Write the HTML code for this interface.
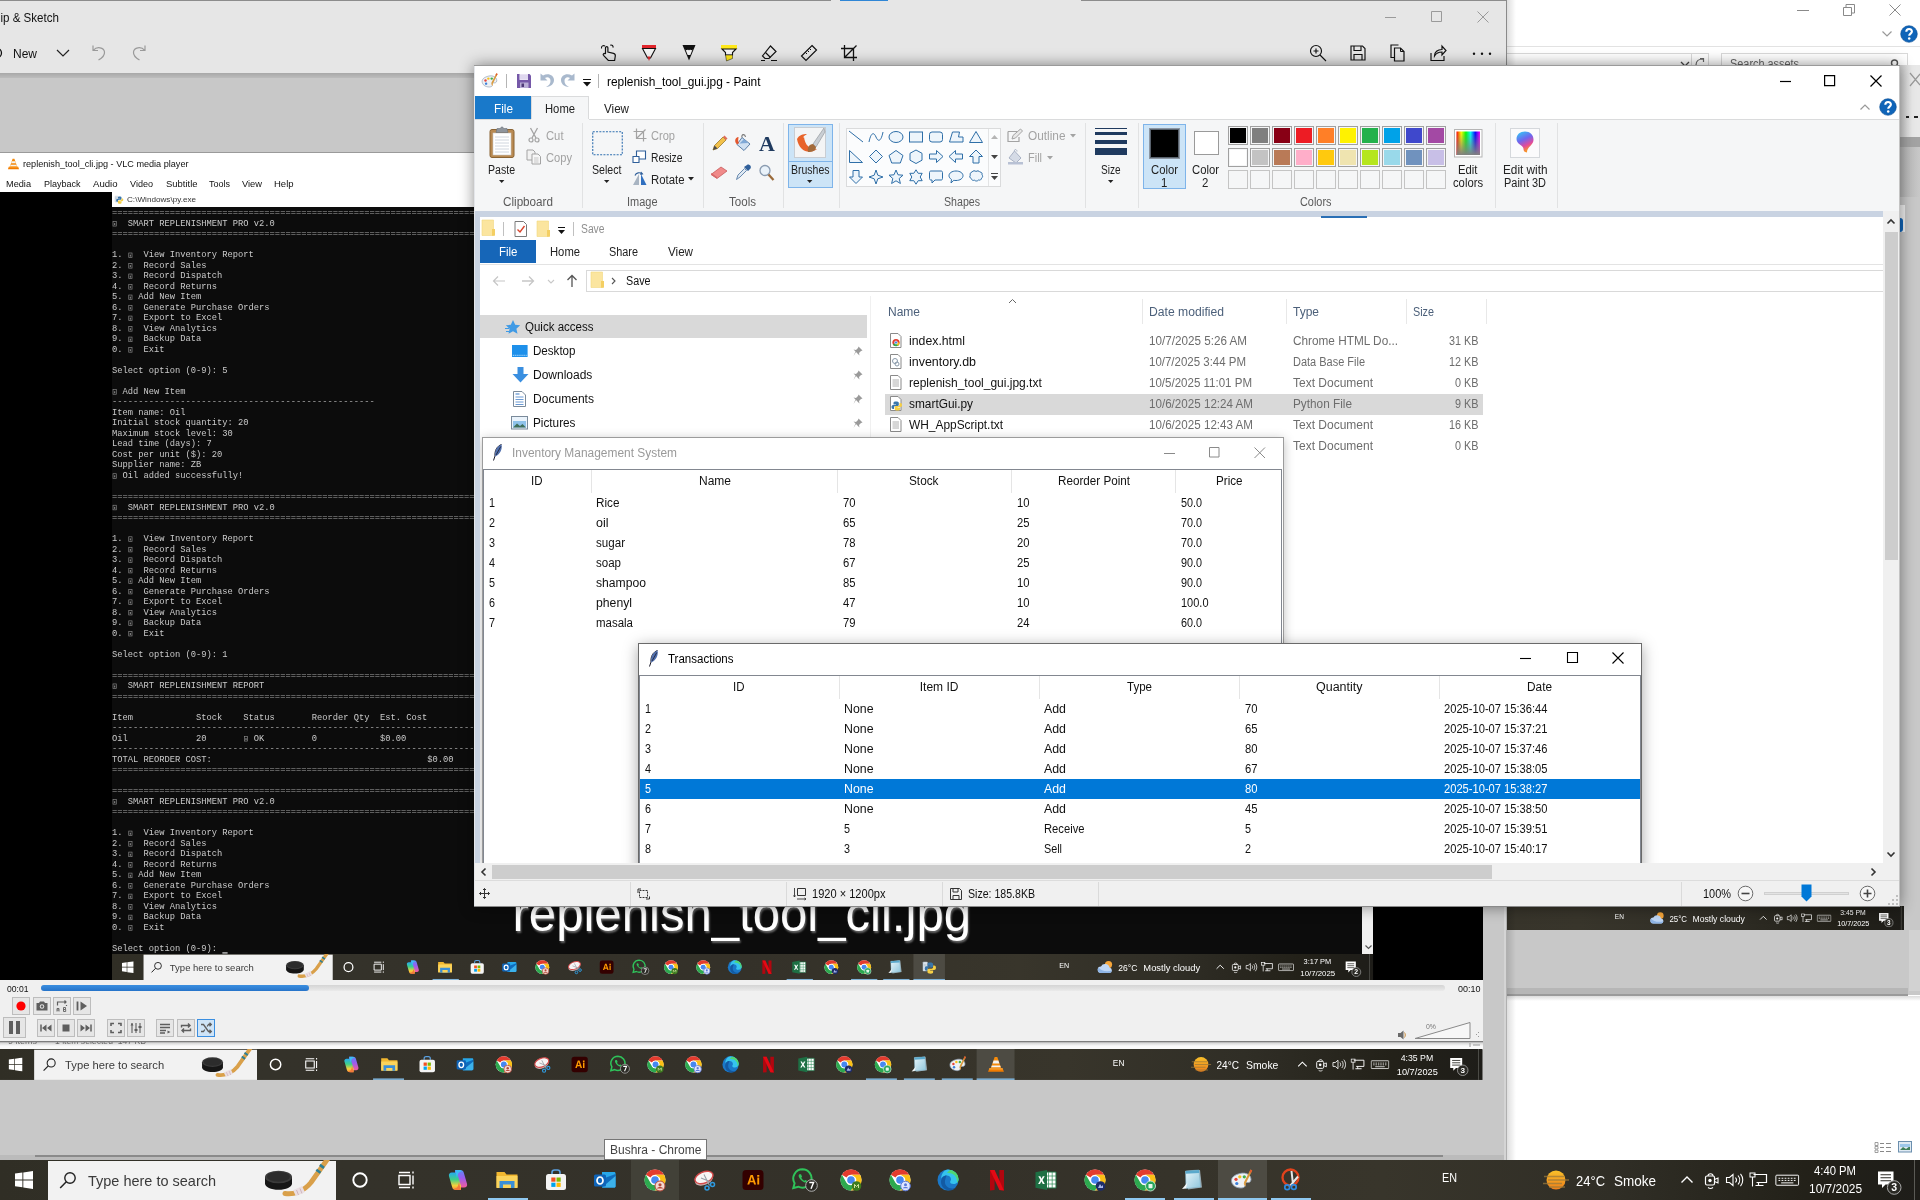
<!DOCTYPE html><html><head><meta charset="utf-8"><title>screen</title><style>
html,body{margin:0;padding:0;}
body{width:1920px;height:1200px;overflow:hidden;position:relative;background:#fff;font-family:"Liberation Sans",sans-serif;}
#r div,#r span,#r svg{position:absolute;}
#r{position:absolute;left:0;top:0;width:1920px;height:1200px;overflow:hidden;will-change:transform;}
.t{white-space:pre;line-height:1.1;transform-origin:0 50%;font-family:"Liberation Sans",sans-serif;}
.t.m{font-family:"Liberation Mono",monospace;}
.t.s{font-family:"Liberation Serif",serif;}
.c{white-space:pre;font-family:"Liberation Mono",monospace;color:#cacaca;font-size:13.333px;line-height:16px;}
.c.d{color:#a8a8a8;}
svg{overflow:visible;}
</style></head><body>
<svg width="0" height="0" style="position:absolute"><defs>
<linearGradient id="gCop" x1="0" y1="0" x2="1" y2="1"><stop offset="0" stop-color="#2bb7f5"/><stop offset=".35" stop-color="#7a5cf0"/><stop offset=".7" stop-color="#f0568a"/><stop offset="1" stop-color="#f8b23c"/></linearGradient>
<linearGradient id="gEdge" x1="0" y1="0" x2="1" y2="1"><stop offset="0" stop-color="#35c1f1"/><stop offset=".5" stop-color="#1b7fd6"/><stop offset="1" stop-color="#2fc26b"/></linearGradient>
<linearGradient id="gNote" x1="0" y1="0" x2="1" y2="1"><stop offset="0" stop-color="#e8f6fb"/><stop offset="1" stop-color="#8fc6dc"/></linearGradient>
<linearGradient id="gRain" x1="0" y1="0" x2="1" y2="0"><stop offset="0" stop-color="#f00"/><stop offset=".2" stop-color="#ff0"/><stop offset=".4" stop-color="#0f0"/><stop offset=".6" stop-color="#0ff"/><stop offset=".8" stop-color="#00f"/><stop offset="1" stop-color="#f0f"/></linearGradient>
<linearGradient id="gRainV" x1="0" y1="0" x2="0" y2="1"><stop offset="0" stop-color="#808080" stop-opacity="0"/><stop offset="1" stop-color="#808080"/></linearGradient>
<linearGradient id="gP3d" x1=".2" y1="0" x2=".6" y2="1"><stop offset="0" stop-color="#35c4f5"/><stop offset=".4" stop-color="#6f66ee"/><stop offset=".7" stop-color="#e34a9a"/><stop offset=".92" stop-color="#f7922c"/></linearGradient>
<linearGradient id="gSmoke" x1="0" y1="0" x2="0" y2="1"><stop offset="0" stop-color="#f9c02a"/><stop offset="1" stop-color="#ee7f1a"/></linearGradient>

<linearGradient id="gCopL" x1="0" y1="0" x2="0" y2="1"><stop offset="0" stop-color="#25a9f0"/><stop offset=".4" stop-color="#3ed08a"/><stop offset=".75" stop-color="#f7d13a"/><stop offset="1" stop-color="#f58a3a"/></linearGradient><linearGradient id="gCopR" x1="0" y1="0" x2="0" y2="1"><stop offset="0" stop-color="#5a8af5"/><stop offset=".45" stop-color="#9a5cf0"/><stop offset="1" stop-color="#f25c9a"/></linearGradient>
<symbol id="win" viewBox="0 0 18 18"><path fill="#fff" d="M0 2.6 7.4 1.6V8.5H0zM8.3 1.5 18 0v8.5H8.3zM0 9.4h7.4v6.9L0 15.3zM8.3 9.4H18V18l-9.7-1.4z"/></symbol>
<symbol id="srch" viewBox="0 0 18 18"><circle cx="11" cy="7" r="5.2" fill="none" stroke="#222" stroke-width="1.4"/><path d="M7.3 10.8 1.2 17" stroke="#222" stroke-width="1.5"/></symbol>
<symbol id="puck" viewBox="0 0 72 40"><path d="M23 33.500C32 35 42 31 49 22.500L67 -3" fill="none" stroke="#d9a04a" stroke-width="5" stroke-linecap="round"/><path d="M32.500 33.300 41.500 29" stroke="#eadfe3" stroke-width="6.500"/><path d="M34.500 30l2 5M38 28.500l2 5" stroke="#c9a9b5" stroke-width=".8"/><path d="M55.700 12.300 57.200 10.200M59.200 7.400 60.700 5.300" stroke="#2d7f95" stroke-width="5.200"/><path d="M3 17v6.500c0 3.500 6 6.300 13.500 6.300S30 27 30 23.500V17z" fill="#161616"/><ellipse cx="16.500" cy="17" rx="13.500" ry="6.300" fill="#3b3b3b"/><ellipse cx="16.500" cy="16.800" rx="11.500" ry="4.900" fill="#2c2c2c"/></symbol>
<symbol id="cort" viewBox="0 0 24 24"><circle cx="12" cy="12" r="6.700" fill="none" stroke="#fff" stroke-width="1.900"/></symbol>
<symbol id="tview" viewBox="0 0 24 24"><path d="M4 7.5h11v9H4z" fill="none" stroke="#fff" stroke-width="1.4"/><path d="M4 4.5h11M4 19.5h11M18 7.5v9M18 3.5v2M18 18.5v2" stroke="#fff" stroke-width="1.4"/></symbol>
<symbol id="copilot" viewBox="0 0 24 24"><path d="M9 2h5.500c1.800 0 2.800 1 3.300 2.700l3.200 11c.6 2-.6 3.800-2.800 3.800h-2.700c-1.800 0-2.800-1-3.300-2.700L9 6z" fill="url(#gCopR)"/><path d="M15 22H9.500c-1.800 0-2.800-1-3.300-2.700L3 8.300C2.400 6.300 3.600 4.500 5.800 4.500h2.700c1.800 0 2.800 1 3.300 2.700L15 18z" fill="url(#gCopL)"/><path d="M9.300 2h4c1.200 0 2 .5 2.500 1.500-2 0-3.300.8-3.800 2.700L11 10z" fill="#3dbcf5"/><path d="M14.700 22h-4c-1.200 0-2-.5-2.500-1.500 2 0 3.300-.8 3.800-2.700L13 14z" fill="#f5793b"/></symbol>
<symbol id="explorer" viewBox="0 0 24 24"><path d="M1.500 4h8l2 2.500h11v13h-21z" fill="#f2b830"/><path d="M1.500 8h21v12h-21z" fill="#fbd45c"/><path d="M4.500 13h15v7h-15z" fill="#3a8fd8"/><path d="M8 16.500h8V20H8z" fill="#fbd45c"/></symbol>
<symbol id="store" viewBox="0 0 24 24"><path d="M8 6V4.500C8 3 9 2 10.500 2h3C15 2 16 3 16 4.500V6" fill="none" stroke="#5aa0e0" stroke-width="1.600"/><rect x="2" y="6" width="20" height="16" rx="2.500" fill="#f4f4f4"/><rect x="7.300" y="9.500" width="4.200" height="4.200" fill="#f25022"/><rect x="12.500" y="9.500" width="4.200" height="4.200" fill="#7fba00"/><rect x="7.300" y="14.700" width="4.200" height="4.200" fill="#00a4ef"/><rect x="12.500" y="14.700" width="4.200" height="4.200" fill="#ffb900"/></symbol>
<symbol id="outlook" viewBox="0 0 24 24"><path d="M9 4h12c1 0 1.500.5 1.500 1.500V18c0 1-.5 1.500-1.500 1.500H9z" fill="#28a8ea"/><path d="M9 11l13.500-5v12c0 1-.5 1.500-1.500 1.500H9z" fill="#0f6cbd"/><path d="M9 19.500 22.500 8v10c0 1-.5 1.500-1.500 1.500z" fill="#50d0ff" opacity=".7"/><rect x="1" y="6.500" width="12" height="12" rx="1.500" fill="#0f64b8"/><ellipse cx="7" cy="12.500" rx="3" ry="3.500" fill="none" stroke="#fff" stroke-width="1.700"/></symbol>
<symbol id="chrome" viewBox="0 0 24 24"><circle cx="12" cy="12" r="10.500" fill="#fff"/><path d="M12 1.500A10.500 10.500 0 0 1 21.100 6.750H12A5.250 5.250 0 0 0 7.450 9.400L2.900 6.750A10.500 10.500 0 0 1 12 1.500z" fill="#e33b2e"/><path d="M21.100 6.750A10.500 10.500 0 0 1 12 22.500l4.550-7.870A5.250 5.250 0 0 0 16.550 9.400L12 6.750z" fill="#fbc116"/><path d="M2.900 6.750 7.450 14.630A5.250 5.250 0 0 0 16.550 14.630L12 22.500A10.500 10.500 0 0 1 2.900 6.750z" fill="#2da94f"/><circle cx="12" cy="12" r="4.700" fill="#fff"/><circle cx="12" cy="12" r="3.800" fill="#4688f1"/></symbol>
<symbol id="chromeA" viewBox="0 0 24 24"><use href="#chrome"/><circle cx="17" cy="18" r="5" fill="#f3d9d2" stroke="#b5493a" stroke-width="1"/><circle cx="17" cy="16.800" r="1.600" fill="#b5493a"/><path d="M14 20.500c.5-2 5.500-2 6 0" fill="#b5493a"/></symbol>
<symbol id="chromeB" viewBox="0 0 24 24"><use href="#chrome"/><circle cx="17.500" cy="18" r="4.800" fill="#3d7a1f"/><path d="M15.500 20v-3.600l2 2.200 2-2.200V20" stroke="#cfe3a0" stroke-width="1" fill="none"/></symbol>
<symbol id="chromeC" viewBox="0 0 24 24"><use href="#chrome"/><circle cx="17.500" cy="18" r="4.800" fill="#dfe6ff" stroke="#5b78d8" stroke-width="1"/><circle cx="17.500" cy="16.800" r="1.500" fill="#5b78d8"/><path d="M14.800 20.300c.5-1.800 4.900-1.800 5.400 0" fill="#5b78d8"/></symbol>
<symbol id="chromeD" viewBox="0 0 24 24"><use href="#chrome"/><circle cx="17.500" cy="18" r="4.800" fill="#1d2c6a"/><path d="M15 20l2-4 1.500 2.500L20 17v3z" fill="#a9b6ea"/></symbol>
<symbol id="chromeE" viewBox="0 0 24 24"><use href="#chrome"/><circle cx="17.500" cy="18" r="5" fill="#27a35b" stroke="#d8f2e0" stroke-width=".8"/><rect x="15.500" y="16" width="4" height="4.200" rx=".6" fill="#e6f7ea"/></symbol>
<symbol id="sniptool" viewBox="0 0 24 24"><ellipse cx="11" cy="11.500" rx="9.500" ry="5.500" fill="#c9b5b5" transform="rotate(-22 11 11.500)"/><ellipse cx="11" cy="9.500" rx="9.500" ry="5.500" fill="#f8f5f5" stroke="#d44a4a" stroke-width="1.500" transform="rotate(-22 11 9.500)"/><path d="M11 6.500l5.500 11M8 10l10 4" stroke="#9aa0a8" stroke-width="1.100"/><circle cx="14" cy="20" r="2" fill="none" stroke="#2f9ae0" stroke-width="1.500"/><circle cx="19.500" cy="16.500" r="2" fill="none" stroke="#2f9ae0" stroke-width="1.500"/></symbol>
<symbol id="ai" viewBox="0 0 24 24"><rect x="1.500" y="2" width="21" height="20" rx="3.500" fill="#330000"/><path d="M6.300 16.500 9.600 7h2.200l3.300 9.500h-2l-.7-2.200H9l-.7 2.200zM9.500 12.700h2.400l-1.200-3.900zM16.300 9.500h1.900v7h-1.900zM16.200 7h2.100v1.700h-2.100z" fill="#ff9a00"/></symbol>
<symbol id="whatsapp" viewBox="0 0 28 26"><path d="M11.500 2.300a9.200 9.200 0 0 0-7.900 13.900L2.300 21l4.900-1.300A9.200 9.200 0 1 0 11.500 2.300z" fill="none" stroke="#2fc25a" stroke-width="2"/><path d="M8.300 7.200c-.8.700-1 2 .1 3.800 1.300 2.200 3.300 3.900 5.300 4.500 1.300.4 2.300-.3 2.700-1.400l-2.100-1.200-1 .9c-1.200-.5-2.600-1.900-3.100-3l.9-1L10 7.300z" fill="#2fc25a"/><circle cx="20.500" cy="18.500" r="5.800" fill="#2b2a25" stroke="#bbb" stroke-width=".9"/><path d="M18.300 15.500h4.300l-2.600 6.300" stroke="#fff" stroke-width="1.400" fill="none"/></symbol>
<symbol id="edge" viewBox="0 0 24 24"><circle cx="12" cy="12" r="10.500" fill="#1b78c8"/><path d="M12 1.500A10.500 10.500 0 0 1 22.500 11c0 3-2.200 5-5 5-2.200 0-3.400-1-3.400-2 0-.8.900-1.300.9-2.700 0-2.200-1.900-3.800-4.300-3.800-2.500 0-4.500 1.200-5.700 3C5.500 5.500 8.300 1.500 12 1.500z" fill="#35c3ee"/><path d="M14 2c5 .5 8.500 4.500 8.500 9 0 1.500-.5 2.800-1.500 3.700C21.500 9 18 4.500 11 5c1-1.500 2-2.500 3-3z" fill="#4fd675"/><path d="M10.700 7.500c-3 0-5.700 2.700-5.700 6.500 0 4.700 4 8.300 8.500 8.300 2.500 0 4.800-1 6.300-2.600-1.200.6-2.500.9-3.800.9-4 0-7.100-3-7.100-6.500 0-2.600 1-5 1.800-6.600z" fill="#135aa3"/></symbol>
<symbol id="netflix" viewBox="0 0 24 24"><path d="M5 2h4.600v20L5 22.500z" fill="#b1060f"/><path d="M14.400 2H19v20.500l-4.600-.5z" fill="#b1060f"/><path d="M5 2h4.600L19 22.500l-4.600-.5z" fill="#e50914"/></symbol>
<symbol id="excel" viewBox="0 0 24 24"><path d="M10 4h12v16H10z" fill="#fff" stroke="#1e7044" stroke-width="1"/><path d="M14.500 4v16M18.200 4v16M10 8h12M10 12h12M10 16h12" stroke="#2a8a55" stroke-width=".7"/><path d="M1.500 4.200 13 2v20L1.500 19.800z" fill="#1e7044"/><path d="M4.300 8.200h2l1.200 2.500L8.800 8.200h1.900l-2.200 3.800 2.300 3.900H8.800l-1.400-2.700-1.400 2.700H4.100l2.300-3.900z" fill="#fff"/></symbol>
<symbol id="notepad" viewBox="0 0 24 24"><path d="M7 3.500 20 2l2 17.500-14 2z" fill="#9aa7ad"/><path d="M5.500 3 19 2l1.500 17-14.500 1.500z" fill="url(#gNote)" stroke="#7fb4cc" stroke-width=".5"/><path d="M5.500 3 19 2l.3 3-13.600.8z" fill="#5aa9cc"/><path d="M2 21l5.500-6.500L6 20.500z" fill="#f4f8fa"/></symbol>
<symbol id="paint" viewBox="0 0 24 24"><path d="M10 5.500c6-1.500 11 1.500 11 6 0 2.800-2.300 3.200-4 3-1.500-.2-2.500.8-2 2.200.6 1.800-.9 3.300-4 3.300-5.500 0-9.500-3.200-9.500-7.500C1.500 9 5 6.700 10 5.500z" fill="#eef1f4" stroke="#8fa0b3" stroke-width=".9"/><circle cx="6" cy="11.300" r="1.600" fill="#e8443a"/><circle cx="9.800" cy="8.800" r="1.600" fill="#f6c11c"/><circle cx="14.300" cy="8.800" r="1.600" fill="#3fae49"/><circle cx="6.800" cy="15.500" r="1.600" fill="#3b7fd9"/><path d="M20.500 1.500l1.700 1-6.400 13-2 .6.300-2z" fill="#d99a3d"/><path d="M20.500 1.500l1.700 1-1.200 2.400-1.700-1z" fill="#e2592f"/><path d="M13.800 16.100l2-.6-.4 3.300z" fill="#f0a033"/></symbol>
<symbol id="vlc" viewBox="0 0 24 24"><path d="M10.300 2.500h3.400l5 14H5.300z" fill="#f58a0b"/><path d="M8.900 7h6.200l1.300 3.600H7.600zM6.700 13.200h10.600l.9 2.500H5.800z" fill="#f4f4f4"/><path d="M3.500 17h17l1.800 4.500H1.700z" fill="#f17b00"/><path d="M3.500 17h17l.6 1.500H2.900z" fill="#ffa735"/></symbol>
<symbol id="python" viewBox="0 0 24 24"><rect x="2.500" y="4" width="7" height="14" rx="1" fill="#dfe7ee" stroke="#9fb0bf" stroke-width=".7"/><path d="M4.500 7v4M7 7v7" stroke="#9fb0bf" stroke-width=".9"/><path d="M13 5c-2.500 0-3.500 1-3.500 2.500V10H14v.8H8c-1.800 0-2.800 1.300-2.800 3.400 0 2.100 1 3.400 2.800 3.400h1.400v-2.200c0-1.500 1.200-2.700 2.800-2.700h3.600c1.300 0 2.200-1 2.200-2.300V7.500C18 6 16.500 5 13 5z" fill="#3a76ab"/><path d="M14.500 22c2.500 0 3.500-1 3.500-2.500V17h-4.500v-.8h6c1.800 0 2.800-1.300 2.800-3.400 0-2.100-1-3.400-2.800-3.400H18v2.200c0 1.500-1.200 2.700-2.800 2.700h-3.600c-1.300 0-2.200 1-2.200 2.300v2.900c0 1.500 1.500 2.500 5.100 2.500z" fill="#f6cf45"/></symbol>
<symbol id="snipsk" viewBox="0 0 24 24"><circle cx="11.500" cy="9.500" r="8" fill="none" stroke="#e2431c" stroke-width="2.300"/><path d="M12.500 3l1.300 11.500M19 8.500l-7.500 9" stroke="#e6e6e6" stroke-width="2"/><circle cx="14.800" cy="19" r="2.400" fill="none" stroke="#2d8be0" stroke-width="1.700"/><circle cx="8.200" cy="19.200" r="2.400" fill="none" stroke="#2d8be0" stroke-width="1.700"/></symbol>
<symbol id="smoke" viewBox="0 0 28 24"><circle cx="14" cy="12" r="9.500" fill="url(#gSmoke)"/><path d="M2 8.500h20M6 12h21M1 15.500h19M7 19h16" stroke="#9c7a3a" stroke-width="1.300" opacity=".75"/></symbol>
<symbol id="cloudy" viewBox="0 0 28 24"><circle cx="18" cy="8" r="5.500" fill="#f6a63a"/><path d="M6.500 21a5 5 0 0 1 0-10 7 7 0 0 1 13 1.500 4.300 4.300 0 0 1 0 8.500z" fill="#bfd7f5"/><path d="M6.500 21a5 5 0 0 1-3.500-8.500c3 5 12 7 20 4.500a4.300 4.300 0 0 1-3.500 4z" fill="#8fb5e6"/></symbol>
<symbol id="chev" viewBox="0 0 16 16"><path d="M2.500 10.500 8 5l5.500 5.500" fill="none" stroke="#fff" stroke-width="1.400"/></symbol>
<symbol id="meet" viewBox="0 0 16 20"><rect x="1.500" y="6" width="9" height="9" rx="1.500" fill="none" stroke="#fff" stroke-width="1.200"/><path d="M10.500 9.500 14 8v5l-3.500-1.500M4 6c0-3 5-3 5 0M4 17.500c1.500 1.200 3.500 1.200 5 0" fill="none" stroke="#fff" stroke-width="1.100"/><circle cx="6" cy="10.500" r="1.700" fill="#fff"/></symbol>
<symbol id="vol" viewBox="0 0 20 16"><path d="M1.500 5.500h3L8 2.500v11l-3.500-3h-3z" fill="none" stroke="#fff" stroke-width="1.100"/><path d="M10.500 5.500c1.200 1.400 1.200 3.600 0 5M13 3.500c2.200 2.600 2.200 6.400 0 9M15.500 1.800c3 3.600 3 8.800 0 12.400" fill="none" stroke="#fff" stroke-width="1.100"/></symbol>
<symbol id="net" viewBox="0 0 20 16"><path d="M4.500 2.500h13v8h-10M9.500 10.500v3M6.500 13.500h8" fill="none" stroke="#fff" stroke-width="1.200"/><rect x="1" y="1" width="5" height="4" fill="none" stroke="#fff" stroke-width="1"/><path d="M3.500 5v9.500" stroke="#fff" stroke-width="1.100"/></symbol>
<symbol id="kbd" viewBox="0 0 28 16"><rect x="1" y="2.500" width="26" height="11.500" rx="1" fill="none" stroke="#fff" stroke-width="1.100"/><path d="M4 6h2M7.500 6h2M11 6h2M14.500 6h2M18 6h2M21.500 6h2M4 8.500h2M7.500 8.500h2M11 8.500h2M14.500 8.500h2M18 8.500h2M21.500 8.500h2M7 11.300h14" stroke="#fff" stroke-width="1.100"/></symbol>
<symbol id="notif" viewBox="0 0 30 28"><path d="M3 4.500h15.500v13H10.500l-3.500 3.500v-3.500H3z" fill="#fff"/><path d="M5.500 7.800h10.500M5.500 10.800h10.500M5.500 13.800h10.500" stroke="#2b2a25" stroke-width="1.100"/><circle cx="19.200" cy="20.500" r="6.800" fill="#2b2a25" stroke="#aaa" stroke-width="1"/></symbol>
<symbol id="qmark" viewBox="0 0 18 18"><circle cx="9" cy="9" r="8.300" fill="#0f64b8"/><circle cx="9" cy="9" r="8.300" fill="none" stroke="#0a4d94" stroke-width=".6"/><path d="M6.300 6.800c0-3.600 5.600-3.600 5.600-.3 0 2-2.700 2.200-2.700 4.300" fill="none" stroke="#fff" stroke-width="2.100"/><circle cx="9.200" cy="13.500" r="1.250" fill="#fff"/></symbol>
</defs></svg>
<div id="r"><div style="left:1506px;top:0px;width:414px;height:1160px;background:#fff;"></div><svg style="left:1797px;top:4px;" width="12" height="12" viewBox="0 0 12 12"><path d="M0 6.500h12" stroke="#8a8a8a" stroke-width="1"/></svg><svg style="left:1843px;top:4px;" width="12" height="12" viewBox="0 0 12 12"><path d="M.5 3.500h8v8h-8zM3 3.500V.5h8.500V9H8.500" fill="none" stroke="#8a8a8a" stroke-width="1"/></svg><svg style="left:1889px;top:4px;" width="12" height="12" viewBox="0 0 12 12"><path d="M.5.5l11 11M11.500.5l-11 11" stroke="#8a8a8a" stroke-width="1"/></svg><svg style="left:1881px;top:30px;" width="12" height="8" viewBox="0 0 12 8"><path d="M1.500 1.500 6 6l4.500-4.500" fill="none" stroke="#999" stroke-width="1.200"/></svg><svg style="left:1900px;top:25px;" width="18" height="18"><use href="#qmark"/></svg><div style="left:1506px;top:46px;width:414px;height:1px;background:#e2e2e2;"></div><div style="left:1506px;top:53px;width:203px;height:14px;background:#fff;border:1px solid #d9d9d9;box-sizing:border-box;"></div><div style="left:1691px;top:53px;width:1px;height:14px;background:#d9d9d9;"></div><svg style="left:1680px;top:61px;" width="10" height="6" viewBox="0 0 10 6"><path d="M1 1l4 4 4-4" fill="none" stroke="#444" stroke-width="1.300"/></svg><svg style="left:1694px;top:57px;" width="12" height="10" viewBox="0 0 12 10"><path d="M2 8c0-4 3-6 7-6M6 1.500h3.500V5" fill="none" stroke="#666" stroke-width="1.200"/></svg><div style="left:1721px;top:53px;width:187px;height:14px;background:#fff;border:1px solid #d9d9d9;box-sizing:border-box;"></div><span class="t" style="left:1730px;top:57.5px;font-size:12px;color:#666;transform:scaleX(0.9075);">Search assets</span><svg style="left:1889px;top:58px;" width="10" height="10" viewBox="0 0 10 10"><circle cx="5.500" cy="5" r="3" fill="none" stroke="#555" stroke-width="1.400"/></svg><div style="left:1506px;top:65px;width:414px;height:930px;background:#c8c8c8;"></div><div style="left:1900px;top:65px;width:20px;height:72px;background:linear-gradient(90deg,#cfcfcf,#e8e8e8 60%);"></div><svg style="left:1909px;top:72px;" width="11" height="16" viewBox="0 0 11 16"><path d="M1 1l10 12M1 14L11 2" stroke="#999" stroke-width="1.200" fill="none"/></svg><div style="left:1906px;top:116px;width:3px;height:2px;background:#222;"></div><div style="left:1914px;top:116px;width:4px;height:2px;background:#222;"></div><div style="left:1900px;top:137px;width:20px;height:10px;background:#a3a3a3;"></div><div style="left:1900px;top:147px;width:20px;height:50px;background:linear-gradient(90deg,#b4b4b4,#c8c8c8);"></div><div style="left:1900px;top:205px;width:5px;height:27px;background:#f0f0f0;"></div><div style="left:1900px;top:218px;width:3px;height:14px;background:#0f64b8;border-radius:0 7px 7px 0;"></div><div style="left:740.5px;top:906px;width:1920px;height:40px;transform:scale(0.606);transform-origin:0 0;overflow:hidden;"><div style="left:0;top:0;width:1920px;height:40px;background:linear-gradient(90deg,#302e25 0%,#34322a 18%,#343129 50%,#38352b 72%,#302e26 84%,#232119 94%,#1e1d19 100%)"></div><svg style="left:15px;top:11px;" width="18" height="18"><use href="#win"/></svg><div style="left:48px;top:1px;width:288px;height:39px;background:#f2f2f2;"></div><svg style="left:59px;top:11px;" width="18" height="18"><use href="#srch"/></svg><span class="t" style="left:88px;top:12.5px;font-size:15px;color:#3a3a3a;transform:scaleX(0.9656);">Type here to search</span><svg style="left:262px;top:0px;" width="72" height="40"><use href="#puck"/></svg><svg style="left:348px;top:8px;" width="24" height="24"><use href="#cort"/></svg><svg style="left:395px;top:8px;" width="24" height="24"><use href="#tview"/></svg><svg style="left:446px;top:8px;" width="24" height="24"><use href="#copilot"/></svg><svg style="left:495px;top:8px;" width="24" height="24"><use href="#explorer"/></svg><svg style="left:544px;top:8px;" width="24" height="24"><use href="#store"/></svg><svg style="left:593px;top:8px;" width="24" height="24"><use href="#outlook"/></svg><svg style="left:643px;top:8px;" width="24" height="24"><use href="#chromeA"/></svg><svg style="left:693px;top:8px;" width="24" height="24"><use href="#sniptool"/></svg><svg style="left:741px;top:8px;" width="24" height="24"><use href="#ai"/></svg><svg style="left:791px;top:7px;" width="28" height="26"><use href="#whatsapp"/></svg><svg style="left:839px;top:8px;" width="24" height="24"><use href="#chromeB"/></svg><svg style="left:888px;top:8px;" width="24" height="24"><use href="#chromeC"/></svg><svg style="left:936px;top:8px;" width="24" height="24"><use href="#edge"/></svg><svg style="left:985px;top:8px;" width="24" height="24"><use href="#netflix"/></svg><svg style="left:1034px;top:8px;" width="24" height="24"><use href="#excel"/></svg><svg style="left:1083px;top:8px;" width="24" height="24"><use href="#chromeD"/></svg><svg style="left:1133px;top:8px;" width="24" height="24"><use href="#chromeE"/></svg><svg style="left:1180px;top:8px;" width="24" height="24"><use href="#notepad"/></svg><svg style="left:1232px;top:8px;" width="24" height="24"><use href="#python"/></svg><span class="t" style="left:1442px;top:11.5px;font-size:12px;color:#fff;transform:scaleX(0.8998);">EN</span><svg style="left:1499px;top:8px;" width="28" height="24"><use href="#cloudy"/></svg><span class="t" style="left:1532px;top:12.5px;font-size:15px;color:#fff;transform:scaleX(0.8653);">25°C</span><span class="t" style="left:1570px;top:12.5px;font-size:15px;color:#fff;transform:scaleX(0.9520);">Mostly cloudy</span><svg style="left:1679px;top:12px;" width="16" height="16"><use href="#chev"/></svg><svg style="left:1704px;top:10px;" width="16" height="20"><use href="#meet"/></svg><svg style="left:1725px;top:12px;" width="20" height="16"><use href="#vol"/></svg><svg style="left:1749px;top:12px;" width="20" height="16"><use href="#net"/></svg><svg style="left:1774.5px;top:13px;" width="24.5" height="14"><use href="#kbd"/></svg><span class="t" style="left:1814px;top:5.3px;font-size:12px;color:#fff;transform:scaleX(0.9399);">3:45 PM</span><span class="t" style="left:1809px;top:23.3px;font-size:12px;color:#fff;transform:scaleX(0.9929);">10/7/2025</span><svg style="left:1875px;top:7px;" width="30" height="28"><use href="#notif"/></svg><span class="t" style="left:1891.28px;top:22.35px;font-size:10.5px;color:#fff;font-weight:bold;">3</span><div style="left:1914px;top:0px;width:1px;height:40px;background:#5a5a55;"></div></div><div style="left:1904px;top:906px;width:16px;height:24px;background:#c8c8c8;"></div><div style="left:1506px;top:930px;width:414px;height:61px;background:#c8c8c8;"></div><div style="left:1909px;top:930px;width:11px;height:61px;background:#d2d2d2;"></div><div style="left:1506px;top:988px;width:402px;height:5.5px;background:#b6b6b6;"></div><div style="left:1506px;top:993.5px;width:402px;height:2px;background:#9a9a9a;"></div><div style="left:1506px;top:995.5px;width:414px;height:164.5px;background:#fff;"></div><div style="left:1506px;top:995.5px;width:414px;height:5px;background:linear-gradient(#dcdcdc,#fff);"></div><svg style="left:1874px;top:1141px;" width="18" height="12" viewBox="0 0 18 12"><path d="M1 1.500h3v3h-3zM1 5.500h3v2.500h-3zM1 9h3v2.500h-3z" fill="none" stroke="#888" stroke-width=".8"/><path d="M6 2.500h4M12 2.500h5M6 6.500h4M12 6.500h5M6 10.500h4M12 10.500h5" stroke="#888" stroke-width="1"/></svg><svg style="left:1898px;top:1141px;" width="14" height="12" viewBox="0 0 14 12"><rect x=".5" y=".5" width="13" height="10.500" fill="#dfeaf3" stroke="#6b8fae" stroke-width="1"/><path d="M2 9l3-3 3 2 4-3v4z" fill="#3f7f5a"/><path d="M2 3h10v3H2z" fill="#9cc7ea"/></svg><div style="left:0px;top:0px;width:1506px;height:1160px;background:#c8c8c8;"></div><div style="left:0px;top:0px;width:1506px;height:73px;background:#e6e6e6;"></div><div style="left:0px;top:0px;width:831px;height:1px;background:#8c8c8c;"></div><div style="left:840px;top:0px;width:48px;height:1px;background:#2f86d6;"></div><div style="left:1081px;top:0px;width:425px;height:1px;background:#8c8c8c;"></div><div style="left:0px;top:73px;width:1506px;height:5px;background:linear-gradient(#a8a8a8,#bcbcbc);"></div><div style="left:1506px;top:0px;width:1px;height:73px;background:#8a8a8a;"></div><div style="left:1506px;top:73px;width:1px;height:1087px;background:#b0b0b0;"></div><div style="left:1507px;top:0px;width:9px;height:1160px;background:linear-gradient(90deg,rgba(0,0,0,.13),rgba(0,0,0,0));"></div><span class="t" style="left:-6px;top:10.8px;font-size:13px;color:#111;transform:scaleX(0.8906);">nip &amp; Sketch</span><svg style="left:-5px;top:46px;" width="9" height="13" viewBox="0 0 9 13"><circle cx="2" cy="7" r="4.500" fill="none" stroke="#111" stroke-width="1.300"/></svg><span class="t" style="left:13px;top:46.75px;font-size:13.5px;color:#111;transform:scaleX(0.8887);">New</span><svg style="left:56px;top:49px;" width="14" height="9" viewBox="0 0 14 9"><path d="M1 1l6 6 6-6" fill="none" stroke="#222" stroke-width="1.200"/></svg><svg style="left:91px;top:43px;" width="16" height="18" viewBox="0 0 16 18"><path d="M2 2.500v5h5M2.300 7.300C6 3 13 4.500 13.500 9c.3 3-2.500 6-6 8" fill="none" stroke="#9a9a9a" stroke-width="1.200"/></svg><svg style="left:131px;top:43px;" width="16" height="18" viewBox="0 0 16 18"><path d="M14 2.500v5H9M13.700 7.300C10 3 3 4.500 2.500 9c-.3 3 2.500 6 6 8" fill="none" stroke="#9a9a9a" stroke-width="1.200"/></svg><svg style="left:600px;top:44px;" width="18" height="18" viewBox="0 0 18 18"><path d="M5.500 9.500V3.800c0-1.700 2.400-1.700 2.400 0V8l5.600 1.300c1.500.4 2 1.400 1.800 2.700l-.7 4.500H8.300L3.500 11.300c-.9-1.100.4-2.400 1.500-1.500z" fill="none" stroke="#111" stroke-width="1.200"/><path d="M1.500 4.500C1 2 3.500.8 5 2.200M10.200 1.200c1.800-.6 3.300.7 2.800 2.400" fill="none" stroke="#111" stroke-width="1.100"/></svg><svg style="left:641px;top:44px;" width="16" height="18" viewBox="0 0 16 18"><path d="M1 1h14v3H1z" fill="#e0262c"/><path d="M1.500 4.500h13L9.500 14h-3z" fill="#f4f4f4" stroke="#111" stroke-width="1.100"/><path d="M6.300 12.500h3.400L8 17z" fill="#e0262c"/></svg><svg style="left:681px;top:44px;" width="16" height="18" viewBox="0 0 16 18"><path d="M1.500 1h13L8 16.500z" fill="#111"/><path d="M4.500 5.500c.8 1 1.500 1 1.800 0 .6 1 1.100 1 1.700 0 .6 1 1.100 1 1.700 0 .4 1 1 1 1.800 0L9.300 11h-2.600z" fill="#f4f4f4"/></svg><svg style="left:720px;top:44px;" width="18" height="18" viewBox="0 0 18 18"><path d="M1 1h16v4H1z" fill="#ffe81a"/><path d="M2 5h14l-3.500 3.500V11h-7V8.500z" fill="#f4f4f4" stroke="#111" stroke-width="1.100"/><path d="M5.500 11h7v3.500L6.500 17z" fill="#ffe81a" stroke="#111" stroke-width=".5"/></svg><svg style="left:760px;top:44px;" width="18" height="18" viewBox="0 0 18 18"><path d="M10.500 2 16 7.500l-7 7H5L2.500 12z" fill="none" stroke="#111" stroke-width="1.200"/><path d="M5.500 8.500l5 5M1 16.500h4M11 16.500h6" stroke="#111" stroke-width="1.200"/></svg><svg style="left:800px;top:44px;" width="18" height="18" viewBox="0 0 18 18"><path d="M12 1.500 16.500 6 6 16.500 1.500 12z" fill="none" stroke="#111" stroke-width="1.200"/><path d="M9.500 4.500l1.500 1.500M7.500 6.500l1.500 1.500M5.500 8.500l1.500 1.500" stroke="#111" stroke-width="1"/></svg><svg style="left:840px;top:44px;" width="18" height="18" viewBox="0 0 18 18"><path d="M4.500 1v12.500H17M1 4.500h12.500V17M5 13 16.500 1.500" fill="none" stroke="#111" stroke-width="1.300"/></svg><svg style="left:1309px;top:44px;" width="18" height="18" viewBox="0 0 18 18"><circle cx="7" cy="7" r="5.500" fill="none" stroke="#111" stroke-width="1.150"/><path d="M11 11l6 6M4.500 7h5M7 4.500v5" stroke="#111" stroke-width="1.150"/></svg><svg style="left:1350px;top:45px;" width="16" height="16" viewBox="0 0 16 16"><path d="M1 1h11.500L15 3.500V15H1z" fill="none" stroke="#111" stroke-width="1.150"/><path d="M4 1v4.500h7V1M4 15V9.500h8V15" fill="none" stroke="#111" stroke-width="1.150"/></svg><svg style="left:1390px;top:44px;" width="16" height="18" viewBox="0 0 16 18"><path d="M8.500 1H1v12.500h3.500" fill="none" stroke="#111" stroke-width="1.200"/><path d="M4.500 4h6l3.500 3.500V17h-9.500z" fill="none" stroke="#111" stroke-width="1.200"/><path d="M10.500 4v3.500H14" fill="none" stroke="#111" stroke-width="1"/></svg><svg style="left:1429px;top:44px;" width="18" height="18" viewBox="0 0 18 18"><path d="M2 9v7.500h13V12" fill="none" stroke="#111" stroke-width="1.150"/><path d="M5.500 12c0-4 3-6.500 7.500-6.500V2l4 4.500-4 4.500V8C9.500 8 7 9.500 5.500 12z" fill="none" stroke="#111" stroke-width="1.200"/></svg><svg style="left:1472px;top:52px;" width="22" height="4" viewBox="0 0 22 4"><circle cx="2" cy="1.700" r="1.200" fill="#111"/><circle cx="10" cy="1.700" r="1.200" fill="#111"/><circle cx="18" cy="1.700" r="1.200" fill="#111"/></svg><svg style="left:1385px;top:11px;" width="12" height="12" viewBox="0 0 12 12"><path d="M0 6.500h11" stroke="#9a9a9a" stroke-width="1"/></svg><svg style="left:1431px;top:11px;" width="12" height="12" viewBox="0 0 12 12"><path d="M.5.5h10v10H.5z" fill="none" stroke="#9a9a9a" stroke-width="1"/></svg><svg style="left:1477px;top:11px;" width="12" height="12" viewBox="0 0 12 12"><path d="M.5.5l11 11M11.500.5l-11 11" stroke="#9a9a9a" stroke-width="1"/></svg><div style="left:0px;top:1154.5px;width:1506px;height:5.5px;background:#bbbbbb;"></div><div style="left:35px;top:1155px;width:1408px;height:2px;background:#8a8a8a;"></div><div style="left:1504px;top:78px;width:2px;height:1082px;background:#d4d4d4;"></div><div style="left:0;top:152px;width:1482.700px;height:928.400px;overflow:hidden;"><div style="left:0;top:-152px;width:1483px;height:1200px;"><div style="left:0px;top:152px;width:1483px;height:1px;background:#9a9a9a;"></div><div style="left:0px;top:153px;width:1483px;height:39px;background:#fff;"></div><svg style="left:7px;top:157px;" width="13" height="14"><use href="#vlc"/></svg><span class="t" style="left:22.5px;top:158.85px;font-size:9.5px;color:#111;transform:scaleX(0.9585);">replenish_tool_cli.jpg - VLC media player</span><span class="t" style="left:6px;top:179.05px;font-size:9.5px;color:#111;transform:scaleX(0.9663);">Media</span><span class="t" style="left:44px;top:179.05px;font-size:9.5px;color:#111;transform:scaleX(0.9469);">Playback</span><span class="t" style="left:93px;top:179.05px;font-size:9.5px;color:#111;transform:scaleX(1.0084);">Audio</span><span class="t" style="left:130px;top:179.05px;font-size:9.5px;color:#111;transform:scaleX(0.9534);">Video</span><span class="t" style="left:165.5px;top:179.05px;font-size:9.5px;color:#111;transform:scaleX(0.9941);">Subtitle</span><span class="t" style="left:209px;top:179.05px;font-size:9.5px;color:#111;transform:scaleX(0.9469);">Tools</span><span class="t" style="left:242px;top:179.05px;font-size:9.5px;color:#111;transform:scaleX(0.9795);">View</span><span class="t" style="left:274px;top:179.05px;font-size:9.5px;color:#111;">Help</span><div style="left:0px;top:192px;width:1483px;height:788px;background:#000;"></div><div style="left:112px;top:192px;width:1261.3px;height:15px;background:#fff;"></div><svg style="left:113.5px;top:194px;" width="10" height="11"><use href="#python"/></svg><span class="t" style="left:127px;top:195.8px;font-size:8px;color:#333;transform:scaleX(1.0166);">C:\Windows\py.exe</span><div style="left:112px;top:207px;width:1261.3px;height:747px;background:#0c0c0c;"></div><div style="left:1362px;top:207px;width:11.3px;height:747px;background:#f0f0f0;"></div><svg style="left:1363.5px;top:944px;" width="9" height="7" viewBox="0 0 9 7"><path d="M1.500 1.500l3 3 3-3" fill="none" stroke="#555" stroke-width="1.200"/></svg><div style="left:112.3px;top:208.15px;width:700px;height:1140px;transform:scale(0.6569);transform-origin:0 0;"><span class="c d" style="left:0;top:0px;">======================================================================</span><span class="c" style="left:0;top:16px;">   SMART REPLENISHMENT PRO v2.0</span><div style="left:0.8px;top:19.8px;width:6.4px;height:8.6px;background:none;border:1.300px solid #8c8c8c;box-sizing:border-box;"></div><div style="left:3.2px;top:22.5px;width:1.6px;height:3px;background:#7a7a7a;"></div><span class="c d" style="left:0;top:32px;">======================================================================</span><span class="c" style="left:0;top:64px;">1.    View Inventory Report</span><div style="left:24.8px;top:67.8px;width:6.4px;height:8.6px;background:none;border:1.300px solid #8c8c8c;box-sizing:border-box;"></div><div style="left:27.2px;top:70.5px;width:1.6px;height:3px;background:#7a7a7a;"></div><span class="c" style="left:0;top:80px;">2.    Record Sales</span><div style="left:24.8px;top:83.8px;width:6.4px;height:8.6px;background:none;border:1.300px solid #8c8c8c;box-sizing:border-box;"></div><div style="left:27.2px;top:86.5px;width:1.6px;height:3px;background:#7a7a7a;"></div><span class="c" style="left:0;top:96px;">3.    Record Dispatch</span><div style="left:24.8px;top:99.8px;width:6.4px;height:8.6px;background:none;border:1.300px solid #8c8c8c;box-sizing:border-box;"></div><div style="left:27.2px;top:102.5px;width:1.6px;height:3px;background:#7a7a7a;"></div><span class="c" style="left:0;top:112px;">4.    Record Returns</span><div style="left:24.8px;top:115.8px;width:6.4px;height:8.6px;background:none;border:1.300px solid #8c8c8c;box-sizing:border-box;"></div><div style="left:27.2px;top:118.5px;width:1.6px;height:3px;background:#7a7a7a;"></div><span class="c" style="left:0;top:128px;">5.   Add New Item</span><div style="left:24.8px;top:131.8px;width:6.4px;height:8.6px;background:none;border:1.300px solid #8c8c8c;box-sizing:border-box;"></div><div style="left:27.2px;top:134.5px;width:1.6px;height:3px;background:#7a7a7a;"></div><span class="c" style="left:0;top:144px;">6.    Generate Purchase Orders</span><div style="left:24.8px;top:147.8px;width:6.4px;height:8.6px;background:none;border:1.300px solid #8c8c8c;box-sizing:border-box;"></div><div style="left:27.2px;top:150.5px;width:1.6px;height:3px;background:#7a7a7a;"></div><span class="c" style="left:0;top:160px;">7.    Export to Excel</span><div style="left:24.8px;top:163.8px;width:6.4px;height:8.6px;background:none;border:1.300px solid #8c8c8c;box-sizing:border-box;"></div><div style="left:27.2px;top:166.5px;width:1.6px;height:3px;background:#7a7a7a;"></div><span class="c" style="left:0;top:176px;">8.    View Analytics</span><div style="left:24.8px;top:179.8px;width:6.4px;height:8.6px;background:none;border:1.300px solid #8c8c8c;box-sizing:border-box;"></div><div style="left:27.2px;top:182.5px;width:1.6px;height:3px;background:#7a7a7a;"></div><span class="c" style="left:0;top:192px;">9.    Backup Data</span><div style="left:24.8px;top:195.8px;width:6.4px;height:8.6px;background:none;border:1.300px solid #8c8c8c;box-sizing:border-box;"></div><div style="left:27.2px;top:198.5px;width:1.6px;height:3px;background:#7a7a7a;"></div><span class="c" style="left:0;top:208px;">0.    Exit</span><div style="left:24.8px;top:211.8px;width:6.4px;height:8.6px;background:none;border:1.300px solid #8c8c8c;box-sizing:border-box;"></div><div style="left:27.2px;top:214.5px;width:1.6px;height:3px;background:#7a7a7a;"></div><span class="c" style="left:0;top:240px;">Select option (0-9): 5</span><span class="c" style="left:0;top:272px;">  Add New Item</span><div style="left:0.8px;top:275.8px;width:6.4px;height:8.6px;background:none;border:1.300px solid #8c8c8c;box-sizing:border-box;"></div><div style="left:3.2px;top:278.5px;width:1.6px;height:3px;background:#7a7a7a;"></div><span class="c d" style="left:0;top:288px;">--------------------------------------------------</span><span class="c" style="left:0;top:304px;">Item name: Oil</span><span class="c" style="left:0;top:320px;">Initial stock quantity: 20</span><span class="c" style="left:0;top:336px;">Maximum stock level: 30</span><span class="c" style="left:0;top:352px;">Lead time (days): 7</span><span class="c" style="left:0;top:368px;">Cost per unit (&#36;): 20</span><span class="c" style="left:0;top:384px;">Supplier name: ZB</span><span class="c" style="left:0;top:400px;">  Oil added successfully!</span><div style="left:0.8px;top:403.8px;width:6.4px;height:8.6px;background:none;border:1.300px solid #8c8c8c;box-sizing:border-box;"></div><div style="left:3.2px;top:406.5px;width:1.6px;height:3px;background:#7a7a7a;"></div><span class="c d" style="left:0;top:432px;">======================================================================</span><span class="c" style="left:0;top:448px;">   SMART REPLENISHMENT PRO v2.0</span><div style="left:0.8px;top:451.8px;width:6.4px;height:8.6px;background:none;border:1.300px solid #8c8c8c;box-sizing:border-box;"></div><div style="left:3.2px;top:454.5px;width:1.6px;height:3px;background:#7a7a7a;"></div><span class="c d" style="left:0;top:464px;">======================================================================</span><span class="c" style="left:0;top:496px;">1.    View Inventory Report</span><div style="left:24.8px;top:499.8px;width:6.4px;height:8.6px;background:none;border:1.300px solid #8c8c8c;box-sizing:border-box;"></div><div style="left:27.2px;top:502.5px;width:1.6px;height:3px;background:#7a7a7a;"></div><span class="c" style="left:0;top:512px;">2.    Record Sales</span><div style="left:24.8px;top:515.8px;width:6.4px;height:8.6px;background:none;border:1.300px solid #8c8c8c;box-sizing:border-box;"></div><div style="left:27.2px;top:518.5px;width:1.6px;height:3px;background:#7a7a7a;"></div><span class="c" style="left:0;top:528px;">3.    Record Dispatch</span><div style="left:24.8px;top:531.8px;width:6.4px;height:8.6px;background:none;border:1.300px solid #8c8c8c;box-sizing:border-box;"></div><div style="left:27.2px;top:534.5px;width:1.6px;height:3px;background:#7a7a7a;"></div><span class="c" style="left:0;top:544px;">4.    Record Returns</span><div style="left:24.8px;top:547.8px;width:6.4px;height:8.6px;background:none;border:1.300px solid #8c8c8c;box-sizing:border-box;"></div><div style="left:27.2px;top:550.5px;width:1.6px;height:3px;background:#7a7a7a;"></div><span class="c" style="left:0;top:560px;">5.   Add New Item</span><div style="left:24.8px;top:563.8px;width:6.4px;height:8.6px;background:none;border:1.300px solid #8c8c8c;box-sizing:border-box;"></div><div style="left:27.2px;top:566.5px;width:1.6px;height:3px;background:#7a7a7a;"></div><span class="c" style="left:0;top:576px;">6.    Generate Purchase Orders</span><div style="left:24.8px;top:579.8px;width:6.4px;height:8.6px;background:none;border:1.300px solid #8c8c8c;box-sizing:border-box;"></div><div style="left:27.2px;top:582.5px;width:1.6px;height:3px;background:#7a7a7a;"></div><span class="c" style="left:0;top:592px;">7.    Export to Excel</span><div style="left:24.8px;top:595.8px;width:6.4px;height:8.6px;background:none;border:1.300px solid #8c8c8c;box-sizing:border-box;"></div><div style="left:27.2px;top:598.5px;width:1.6px;height:3px;background:#7a7a7a;"></div><span class="c" style="left:0;top:608px;">8.    View Analytics</span><div style="left:24.8px;top:611.8px;width:6.4px;height:8.6px;background:none;border:1.300px solid #8c8c8c;box-sizing:border-box;"></div><div style="left:27.2px;top:614.5px;width:1.6px;height:3px;background:#7a7a7a;"></div><span class="c" style="left:0;top:624px;">9.    Backup Data</span><div style="left:24.8px;top:627.8px;width:6.4px;height:8.6px;background:none;border:1.300px solid #8c8c8c;box-sizing:border-box;"></div><div style="left:27.2px;top:630.5px;width:1.6px;height:3px;background:#7a7a7a;"></div><span class="c" style="left:0;top:640px;">0.    Exit</span><div style="left:24.8px;top:643.8px;width:6.4px;height:8.6px;background:none;border:1.300px solid #8c8c8c;box-sizing:border-box;"></div><div style="left:27.2px;top:646.5px;width:1.6px;height:3px;background:#7a7a7a;"></div><span class="c" style="left:0;top:672px;">Select option (0-9): 1</span><span class="c d" style="left:0;top:704px;">======================================================================</span><span class="c" style="left:0;top:720px;">   SMART REPLENISHMENT REPORT</span><div style="left:0.8px;top:723.8px;width:6.4px;height:8.6px;background:none;border:1.300px solid #8c8c8c;box-sizing:border-box;"></div><div style="left:3.2px;top:726.5px;width:1.6px;height:3px;background:#7a7a7a;"></div><span class="c d" style="left:0;top:736px;">======================================================================</span><span class="c" style="left:0;top:768px;">Item            Stock    Status       Reorder Qty  Est. Cost</span><span class="c d" style="left:0;top:784px;">----------------------------------------------------------------------</span><span class="c" style="left:0;top:800px;">Oil             20         OK         0            &#36;0.00</span><div style="left:200.8px;top:803.8px;width:6.4px;height:8.6px;background:none;border:1.300px solid #8c8c8c;box-sizing:border-box;"></div><div style="left:203.2px;top:806.5px;width:1.6px;height:3px;background:#7a7a7a;"></div><span class="c d" style="left:0;top:816px;">----------------------------------------------------------------------</span><span class="c" style="left:0;top:832px;">TOTAL REORDER COST:                                         &#36;0.00</span><span class="c d" style="left:0;top:848px;">======================================================================</span><span class="c d" style="left:0;top:880px;">======================================================================</span><span class="c" style="left:0;top:896px;">   SMART REPLENISHMENT PRO v2.0</span><div style="left:0.8px;top:899.8px;width:6.4px;height:8.6px;background:none;border:1.300px solid #8c8c8c;box-sizing:border-box;"></div><div style="left:3.2px;top:902.5px;width:1.6px;height:3px;background:#7a7a7a;"></div><span class="c d" style="left:0;top:912px;">======================================================================</span><span class="c" style="left:0;top:944px;">1.    View Inventory Report</span><div style="left:24.8px;top:947.8px;width:6.4px;height:8.6px;background:none;border:1.300px solid #8c8c8c;box-sizing:border-box;"></div><div style="left:27.2px;top:950.5px;width:1.6px;height:3px;background:#7a7a7a;"></div><span class="c" style="left:0;top:960px;">2.    Record Sales</span><div style="left:24.8px;top:963.8px;width:6.4px;height:8.6px;background:none;border:1.300px solid #8c8c8c;box-sizing:border-box;"></div><div style="left:27.2px;top:966.5px;width:1.6px;height:3px;background:#7a7a7a;"></div><span class="c" style="left:0;top:976px;">3.    Record Dispatch</span><div style="left:24.8px;top:979.8px;width:6.4px;height:8.6px;background:none;border:1.300px solid #8c8c8c;box-sizing:border-box;"></div><div style="left:27.2px;top:982.5px;width:1.6px;height:3px;background:#7a7a7a;"></div><span class="c" style="left:0;top:992px;">4.    Record Returns</span><div style="left:24.8px;top:995.8px;width:6.4px;height:8.6px;background:none;border:1.300px solid #8c8c8c;box-sizing:border-box;"></div><div style="left:27.2px;top:998.5px;width:1.6px;height:3px;background:#7a7a7a;"></div><span class="c" style="left:0;top:1008px;">5.   Add New Item</span><div style="left:24.8px;top:1011.8px;width:6.4px;height:8.6px;background:none;border:1.300px solid #8c8c8c;box-sizing:border-box;"></div><div style="left:27.2px;top:1014.5px;width:1.6px;height:3px;background:#7a7a7a;"></div><span class="c" style="left:0;top:1024px;">6.    Generate Purchase Orders</span><div style="left:24.8px;top:1027.8px;width:6.4px;height:8.6px;background:none;border:1.300px solid #8c8c8c;box-sizing:border-box;"></div><div style="left:27.2px;top:1030.5px;width:1.6px;height:3px;background:#7a7a7a;"></div><span class="c" style="left:0;top:1040px;">7.    Export to Excel</span><div style="left:24.8px;top:1043.8px;width:6.4px;height:8.6px;background:none;border:1.300px solid #8c8c8c;box-sizing:border-box;"></div><div style="left:27.2px;top:1046.5px;width:1.6px;height:3px;background:#7a7a7a;"></div><span class="c" style="left:0;top:1056px;">8.    View Analytics</span><div style="left:24.8px;top:1059.8px;width:6.4px;height:8.6px;background:none;border:1.300px solid #8c8c8c;box-sizing:border-box;"></div><div style="left:27.2px;top:1062.5px;width:1.6px;height:3px;background:#7a7a7a;"></div><span class="c" style="left:0;top:1072px;">9.    Backup Data</span><div style="left:24.8px;top:1075.8px;width:6.4px;height:8.6px;background:none;border:1.300px solid #8c8c8c;box-sizing:border-box;"></div><div style="left:27.2px;top:1078.5px;width:1.6px;height:3px;background:#7a7a7a;"></div><span class="c" style="left:0;top:1088px;">0.    Exit</span><div style="left:24.8px;top:1091.8px;width:6.4px;height:8.6px;background:none;border:1.300px solid #8c8c8c;box-sizing:border-box;"></div><div style="left:27.2px;top:1094.5px;width:1.6px;height:3px;background:#7a7a7a;"></div><span class="c" style="left:0;top:1120px;">Select option (0-9): </span><div style="left:168px;top:1132.5px;width:8px;height:2.3px;background:#ccc;"></div></div><div style="left:112px;top:953.7px;width:1920px;height:40px;transform:scale(0.6569);transform-origin:0 0;overflow:hidden;"><div style="left:0;top:0;width:1920px;height:40px;background:linear-gradient(90deg,#302e25 0%,#34322a 18%,#343129 50%,#38352b 72%,#302e26 84%,#232119 94%,#1e1d19 100%)"></div><div style="left:1220px;top:0px;width:48px;height:40px;background:#4d4b43;"></div><div style="left:1220px;top:38px;width:48px;height:2px;background:#7fb2d8;"></div><div style="left:488px;top:38px;width:40px;height:2px;background:#7fb2d8;"></div><div style="left:1027px;top:38px;width:40px;height:2px;background:#7fb2d8;"></div><div style="left:1125px;top:38px;width:40px;height:2px;background:#7fb2d8;"></div><div style="left:1174px;top:38px;width:40px;height:2px;background:#7fb2d8;"></div><svg style="left:15px;top:11px;" width="18" height="18"><use href="#win"/></svg><div style="left:48px;top:1px;width:288px;height:39px;background:#f2f2f2;"></div><svg style="left:59px;top:11px;" width="18" height="18"><use href="#srch"/></svg><span class="t" style="left:88px;top:12.5px;font-size:15px;color:#3a3a3a;transform:scaleX(0.9656);">Type here to search</span><svg style="left:262px;top:0px;" width="72" height="40"><use href="#puck"/></svg><svg style="left:348px;top:8px;" width="24" height="24"><use href="#cort"/></svg><svg style="left:395px;top:8px;" width="24" height="24"><use href="#tview"/></svg><svg style="left:446px;top:8px;" width="24" height="24"><use href="#copilot"/></svg><svg style="left:495px;top:8px;" width="24" height="24"><use href="#explorer"/></svg><svg style="left:544px;top:8px;" width="24" height="24"><use href="#store"/></svg><svg style="left:593px;top:8px;" width="24" height="24"><use href="#outlook"/></svg><svg style="left:643px;top:8px;" width="24" height="24"><use href="#chromeA"/></svg><svg style="left:693px;top:8px;" width="24" height="24"><use href="#sniptool"/></svg><svg style="left:741px;top:8px;" width="24" height="24"><use href="#ai"/></svg><svg style="left:791px;top:7px;" width="28" height="26"><use href="#whatsapp"/></svg><svg style="left:839px;top:8px;" width="24" height="24"><use href="#chromeB"/></svg><svg style="left:888px;top:8px;" width="24" height="24"><use href="#chromeC"/></svg><svg style="left:936px;top:8px;" width="24" height="24"><use href="#edge"/></svg><svg style="left:985px;top:8px;" width="24" height="24"><use href="#netflix"/></svg><svg style="left:1034px;top:8px;" width="24" height="24"><use href="#excel"/></svg><svg style="left:1083px;top:8px;" width="24" height="24"><use href="#chromeD"/></svg><svg style="left:1133px;top:8px;" width="24" height="24"><use href="#chromeE"/></svg><svg style="left:1180px;top:8px;" width="24" height="24"><use href="#notepad"/></svg><svg style="left:1232px;top:8px;" width="24" height="24"><use href="#python"/></svg><span class="t" style="left:1442px;top:11.5px;font-size:12px;color:#fff;transform:scaleX(0.8998);">EN</span><svg style="left:1499px;top:8px;" width="28" height="24"><use href="#cloudy"/></svg><span class="t" style="left:1532px;top:12.5px;font-size:15px;color:#fff;transform:scaleX(0.8653);">26°C</span><span class="t" style="left:1570px;top:12.5px;font-size:15px;color:#fff;transform:scaleX(0.9520);">Mostly cloudy</span><svg style="left:1679px;top:12px;" width="16" height="16"><use href="#chev"/></svg><svg style="left:1704px;top:10px;" width="16" height="20"><use href="#meet"/></svg><svg style="left:1725px;top:12px;" width="20" height="16"><use href="#vol"/></svg><svg style="left:1749px;top:12px;" width="20" height="16"><use href="#net"/></svg><svg style="left:1774.5px;top:13px;" width="24.5" height="14"><use href="#kbd"/></svg><span class="t" style="left:1814px;top:5.3px;font-size:12px;color:#fff;transform:scaleX(0.9399);">3:17 PM</span><span class="t" style="left:1809px;top:23.3px;font-size:12px;color:#fff;transform:scaleX(0.9929);">10/7/2025</span><svg style="left:1875px;top:7px;" width="30" height="28"><use href="#notif"/></svg><span class="t" style="left:1891.28px;top:22.35px;font-size:10.5px;color:#fff;font-weight:bold;">2</span><div style="left:1914px;top:0px;width:1px;height:40px;background:#5a5a55;"></div></div><span class="t" style="left:512.5px;top:887.35px;font-size:49.1px;color:#fff;text-shadow:1px 2px 2px #666;">replenish_tool_cli.jpg</span><div style="left:0px;top:980px;width:1483px;height:61px;background:#f0f0f0;"></div><span class="t" style="left:7px;top:983.55px;font-size:9.5px;color:#111;transform:scaleX(0.9045);">00:01</span><span class="t" style="left:1458px;top:983.55px;font-size:9.5px;color:#111;transform:scaleX(0.9465);">00:10</span><div style="left:41px;top:985px;width:1404px;height:6px;background:linear-gradient(#d4d4d4,#eaeaea);border-radius:3px;"></div><div style="left:41px;top:985px;width:267.5px;height:6px;background:linear-gradient(#3a8ee0,#2673c9);border-radius:3px;"></div><div style="left:12px;top:996.5px;width:18px;height:18px;background:#e6e6e6;border:1px solid #bdbdbd;box-sizing:border-box;"></div><svg style="left:14px;top:998.5px;" width="14" height="14" viewBox="0 0 14 14"><circle cx="7" cy="7" r="4.600" fill="#f00"/></svg><div style="left:32.5px;top:996.5px;width:18px;height:18px;background:#e6e6e6;border:1px solid #bdbdbd;box-sizing:border-box;"></div><svg style="left:34.5px;top:998.5px;" width="14" height="14" viewBox="0 0 14 14"><path d="M1.500 4h2.500l1-1.500h4l1 1.500h2.500v7.500h-11z" fill="#5e5e5e"/><circle cx="7" cy="7.500" r="2.200" fill="#e6e6e6"/><circle cx="7" cy="7.500" r="1.200" fill="#5e5e5e"/></svg><div style="left:53px;top:996.5px;width:18px;height:18px;background:#e6e6e6;border:1px solid #bdbdbd;box-sizing:border-box;"></div><svg style="left:55px;top:998.5px;" width="14" height="14" viewBox="0 0 14 14"><path d="M2.500 6.500V3h8.500M9.500 1.500 11 3 9.500 4.500M11.500 6v1" fill="none" stroke="#5e5e5e" stroke-width="1.200"/><path d="M2 12.500V9.500h2v3M2 11h2M8.500 12.500v-4h2v2h-2M8.500 12.500h2.200v-2" fill="none" stroke="#5e5e5e" stroke-width=".9"/></svg><div style="left:73px;top:996.5px;width:18px;height:18px;background:#e6e6e6;border:1px solid #bdbdbd;box-sizing:border-box;"></div><svg style="left:75px;top:998.5px;" width="14" height="14" viewBox="0 0 14 14"><path d="M2.500 2.500v9" stroke="#5e5e5e" stroke-width="1.800"/><path d="M5.500 2.500 12 7l-6.500 4.500z" fill="#5e5e5e"/></svg><div style="left:3px;top:1016.75px;width:23px;height:21.5px;background:#e6e6e6;border:1px solid #bdbdbd;box-sizing:border-box;"></div><div style="left:9px;top:1021.3px;width:4.2px;height:12.8px;background:#5e5e5e;"></div><div style="left:16.3px;top:1021.3px;width:4.2px;height:12.8px;background:#5e5e5e;"></div><div style="left:37px;top:1018.5px;width:18px;height:18px;background:#e6e6e6;border:1px solid #bdbdbd;box-sizing:border-box;"></div><svg style="left:39px;top:1020.5px;" width="14" height="14" viewBox="0 0 14 14"><path d="M2 3.500v7" stroke="#5e5e5e" stroke-width="1.500"/><path d="M7.500 3.500v7L3 7zM12.500 3.500v7L8 7z" fill="#5e5e5e"/></svg><div style="left:57px;top:1018.5px;width:18px;height:18px;background:#e6e6e6;border:1px solid #bdbdbd;box-sizing:border-box;"></div><svg style="left:59px;top:1020.5px;" width="14" height="14" viewBox="0 0 14 14"><rect x="3.500" y="3.500" width="7" height="7" fill="#5e5e5e"/></svg><div style="left:77px;top:1018.5px;width:18px;height:18px;background:#e6e6e6;border:1px solid #bdbdbd;box-sizing:border-box;"></div><svg style="left:79px;top:1020.5px;" width="14" height="14" viewBox="0 0 14 14"><path d="M12 3.500v7" stroke="#5e5e5e" stroke-width="1.500"/><path d="M6.500 3.500v7L11 7zM1.500 3.500v7L6 7z" fill="#5e5e5e"/></svg><div style="left:107px;top:1018.5px;width:18px;height:18px;background:#e6e6e6;border:1px solid #bdbdbd;box-sizing:border-box;"></div><svg style="left:109px;top:1020.5px;" width="14" height="14" viewBox="0 0 14 14"><path d="M2 5V2.500h3M9 2.500h3V5M12 9v2.500H9M5 11.500H2V9" fill="none" stroke="#5e5e5e" stroke-width="1.600"/></svg><div style="left:127px;top:1018.5px;width:18px;height:18px;background:#e6e6e6;border:1px solid #bdbdbd;box-sizing:border-box;"></div><svg style="left:129px;top:1020.5px;" width="14" height="14" viewBox="0 0 14 14"><path d="M3 2v10M7 2v10M11 2v10" stroke="#5e5e5e" stroke-width="1.100"/><path d="M1.500 4.500 3 2l1.500 2.500zM5.500 8h3v2h-3zM9.500 5h3v2h-3z" fill="#5e5e5e"/></svg><div style="left:156px;top:1018.5px;width:18px;height:18px;background:#e6e6e6;border:1px solid #bdbdbd;box-sizing:border-box;"></div><svg style="left:158px;top:1020.5px;" width="14" height="14" viewBox="0 0 14 14"><path d="M2 3.500h10M2 6.500h10M2 9.500h6M2 12h5" stroke="#5e5e5e" stroke-width="1.300"/><path d="M9.500 9.500 12.500 11l-3 1.500z" fill="#5e5e5e"/></svg><div style="left:176.5px;top:1018.5px;width:18px;height:18px;background:#e6e6e6;border:1px solid #bdbdbd;box-sizing:border-box;"></div><svg style="left:178.5px;top:1020.5px;" width="14" height="14" viewBox="0 0 14 14"><path d="M2.500 6.500v-2h8M9 2.500l2 2-2 2M11.500 7.500v2h-8M5 7.500l-2 2 2 2" fill="none" stroke="#5e5e5e" stroke-width="1.400"/></svg><div style="left:197px;top:1018.5px;width:18px;height:18px;background:#cfe4f7;border:1px solid #3a8ee0;box-sizing:border-box;"></div><svg style="left:199px;top:1020.5px;" width="14" height="14" viewBox="0 0 14 14"><path d="M2 3.500h2.500l5 7H12M2 10.500h2.500l1.300-2M8.200 5.500l1.300-2H12M10.500 1.800 12.300 3.500 10.500 5.200M10.500 8.800l1.800 1.700-1.800 1.700" fill="none" stroke="#5e5e5e" stroke-width="1.300"/></svg><svg style="left:1397px;top:1028.5px;" width="10" height="12" viewBox="0 0 10 12"><path d="M1 4h2.500L6.500 1.500v9L3.500 8H1z" fill="#6a6a6a"/><path d="M7.500 3.500c1 1.500 1 3.500 0 5" fill="none" stroke="#c98a3a" stroke-width="1"/></svg><svg style="left:1413px;top:1020px;" width="60" height="20" viewBox="0 0 60 20"><path d="M2 18.500 57 2.500v16z" fill="#f7f7f7" stroke="#8a8a8a" stroke-width="1"/></svg><span class="t" style="left:1425.5px;top:1022.5px;font-size:7px;color:#777;transform:scaleX(0.9884);">0%</span><div style="left:1476px;top:1034px;width:1px;height:1px;background:#999;"></div><div style="left:1478px;top:1036px;width:1px;height:1px;background:#999;"></div><div style="left:1478px;top:1032px;width:1px;height:1px;background:#999;"></div><div style="left:0px;top:1042px;width:1483px;height:8px;background:#fafafa;"></div><div style="left:0;top:1042px;width:300px;height:8px;overflow:hidden;"><span class="t" style="left:8px;top:-5.75px;font-size:9.5px;color:#555;transform:scaleX(0.9471);">9 items</span><span class="t" style="left:55px;top:-5.75px;font-size:9.5px;color:#555;transform:scaleX(0.9070);">1 item selected  147 KB</span></div><div style="left:0px;top:1041px;width:1483px;height:5px;background:linear-gradient(rgba(90,90,90,.85),rgba(150,150,150,.35) 40%,rgba(200,200,200,0));"></div><svg style="left:1469px;top:1042px;" width="12" height="7" viewBox="0 0 12 7"><path d="M0 2h2M0 4h2M4 3h7" stroke="#999" stroke-width="1"/></svg><div style="left:-3.2px;top:1049.45px;width:1920px;height:40px;transform:scale(0.7738);transform-origin:0 0;overflow:hidden;"><div style="left:0;top:0;width:1920px;height:40px;background:linear-gradient(90deg,#302e25 0%,#34322a 18%,#343129 50%,#38352b 72%,#302e26 84%,#232119 94%,#1e1d19 100%)"></div><div style="left:1266px;top:0px;width:49px;height:40px;background:#4d4b43;"></div><div style="left:1266px;top:38px;width:49px;height:2px;background:#7fb2d8;"></div><div style="left:486px;top:38px;width:40px;height:2px;background:#7fb2d8;"></div><div style="left:1123px;top:38px;width:40px;height:2px;background:#7fb2d8;"></div><div style="left:1172px;top:38px;width:40px;height:2px;background:#7fb2d8;"></div><div style="left:1221px;top:38px;width:40px;height:2px;background:#7fb2d8;"></div><svg style="left:15px;top:11px;" width="18" height="18"><use href="#win"/></svg><div style="left:48px;top:1px;width:288px;height:39px;background:#f2f2f2;"></div><svg style="left:59px;top:11px;" width="18" height="18"><use href="#srch"/></svg><span class="t" style="left:88px;top:12.5px;font-size:15px;color:#3a3a3a;transform:scaleX(0.9656);">Type here to search</span><svg style="left:262px;top:0px;" width="72" height="40"><use href="#puck"/></svg><svg style="left:348px;top:8px;" width="24" height="24"><use href="#cort"/></svg><svg style="left:395px;top:8px;" width="24" height="24"><use href="#tview"/></svg><svg style="left:446px;top:8px;" width="24" height="24"><use href="#copilot"/></svg><svg style="left:495px;top:8px;" width="24" height="24"><use href="#explorer"/></svg><svg style="left:544px;top:8px;" width="24" height="24"><use href="#store"/></svg><svg style="left:593px;top:8px;" width="24" height="24"><use href="#outlook"/></svg><svg style="left:643px;top:8px;" width="24" height="24"><use href="#chromeA"/></svg><svg style="left:693px;top:8px;" width="24" height="24"><use href="#sniptool"/></svg><svg style="left:741px;top:8px;" width="24" height="24"><use href="#ai"/></svg><svg style="left:791px;top:7px;" width="28" height="26"><use href="#whatsapp"/></svg><svg style="left:839px;top:8px;" width="24" height="24"><use href="#chromeB"/></svg><svg style="left:888px;top:8px;" width="24" height="24"><use href="#chromeC"/></svg><svg style="left:936px;top:8px;" width="24" height="24"><use href="#edge"/></svg><svg style="left:985px;top:8px;" width="24" height="24"><use href="#netflix"/></svg><svg style="left:1034px;top:8px;" width="24" height="24"><use href="#excel"/></svg><svg style="left:1083px;top:8px;" width="24" height="24"><use href="#chromeD"/></svg><svg style="left:1133px;top:8px;" width="24" height="24"><use href="#chromeE"/></svg><svg style="left:1180px;top:8px;" width="24" height="24"><use href="#notepad"/></svg><svg style="left:1230px;top:8px;" width="24" height="24"><use href="#paint"/></svg><svg style="left:1279px;top:8px;" width="24" height="24"><use href="#vlc"/></svg><span class="t" style="left:1442px;top:11.5px;font-size:12px;color:#fff;transform:scaleX(0.8998);">EN</span><svg style="left:1542px;top:8px;" width="28" height="24"><use href="#smoke"/></svg><span class="t" style="left:1576px;top:12.5px;font-size:15px;color:#fff;transform:scaleX(0.8653);">24°C</span><span class="t" style="left:1614px;top:12.5px;font-size:15px;color:#fff;transform:scaleX(0.8997);">Smoke</span><svg style="left:1679px;top:12px;" width="16" height="16"><use href="#chev"/></svg><svg style="left:1704px;top:10px;" width="16" height="20"><use href="#meet"/></svg><svg style="left:1725px;top:12px;" width="20" height="16"><use href="#vol"/></svg><svg style="left:1749px;top:12px;" width="20" height="16"><use href="#net"/></svg><svg style="left:1774.5px;top:13px;" width="24.5" height="14"><use href="#kbd"/></svg><span class="t" style="left:1814px;top:5.3px;font-size:12px;color:#fff;transform:scaleX(0.9399);">4:35 PM</span><span class="t" style="left:1809px;top:23.3px;font-size:12px;color:#fff;transform:scaleX(0.9929);">10/7/2025</span><svg style="left:1875px;top:7px;" width="30" height="28"><use href="#notif"/></svg><span class="t" style="left:1891.28px;top:22.35px;font-size:10.5px;color:#fff;font-weight:bold;">3</span><div style="left:1914px;top:0px;width:1px;height:40px;background:#5a5a55;"></div></div></div></div><div style="left:474px;top:65px;width:1426px;height:842px;box-shadow:0 0 14px rgba(0,0,0,.45);background:#fff;"></div><div style="left:474px;top:65px;width:1426px;height:31px;background:#fff;"></div><svg style="left:481px;top:72px;" width="18" height="18"><use href="#paint"/></svg><div style="left:506px;top:74px;width:1px;height:14px;background:#b5b5b5;"></div><svg style="left:516px;top:73px;" width="16" height="16" viewBox="0 0 16 16"><path d="M1 1h12.500L15 2.500V15H1z" fill="#7558a8"/><path d="M3.500 1h8.500v6H3.500z" fill="#e9e2f4"/><path d="M3.500 3h8.500M3.500 5h8.500" stroke="#cfc4e4" stroke-width=".7"/><path d="M4 9.500h8.500V15H4z" fill="#b9aed6"/><path d="M5.500 10.500h2.500v3.500H5.500z" fill="#4e3a78"/></svg><svg style="left:539px;top:72px;" width="16" height="17" viewBox="0 0 16 17"><path d="M1.500 1.500v7h7L6 6c2.500-1.500 5.500-.5 5.500 3 0 2.500-1.500 4.500-4.500 6 5.500-.5 8-3.500 8-7C15 3 9 .5 4 3.500z" fill="#a9b9cd"/></svg><svg style="left:560px;top:72px;" width="16" height="17" viewBox="0 0 16 17"><path d="M14.500 1.500v7h-7L10 6C7.500 4.500 4.500 5.500 4.500 9c0 2.500 1.500 4.500 4.500 6C3.500 14.500 1 11.500 1 8 1 3 7 .5 12 3.500z" fill="#a9b9cd"/></svg><div style="left:583px;top:78.5px;width:8px;height:1.5px;background:#111;"></div><svg style="left:583px;top:81.5px;" width="8" height="4.5" viewBox="0 0 8 4.5"><path d="M0 0h8L4 4.500z" fill="#111"/></svg><div style="left:598px;top:74px;width:1px;height:14px;background:#b5b5b5;"></div><span class="t" style="left:606.5px;top:75.5px;font-size:12px;color:#000;transform:scaleX(0.9919);">replenish_tool_gui.jpg - Paint</span><svg style="left:1780px;top:75px;" width="12" height="12" viewBox="0 0 12 12"><path d="M0 6.500h11" stroke="#000" stroke-width="1.200"/></svg><svg style="left:1824px;top:75px;" width="12" height="12" viewBox="0 0 12 12"><path d="M.600.600h10v10H.600z" fill="none" stroke="#000" stroke-width="1.200"/></svg><svg style="left:1870px;top:75px;" width="12" height="12" viewBox="0 0 12 12"><path d="M.500.500l11 11M11.500.500l-11 11" stroke="#000" stroke-width="1.200"/></svg><div style="left:474px;top:96px;width:1426px;height:23px;background:#fff;"></div><div style="left:475px;top:96px;width:56px;height:23px;background:#1979ca;"></div><span class="t" style="left:494px;top:102.7px;font-size:12px;color:#fff;transform:scaleX(0.9827);">File</span><div style="left:531px;top:96px;width:58px;height:24px;background:#f5f6f7;border:1px solid #dadbdc;border-bottom:none;box-sizing:border-box;"></div><span class="t" style="left:545px;top:102.7px;font-size:12px;color:#222;transform:scaleX(0.9373);">Home</span><span class="t" style="left:604px;top:102.7px;font-size:12px;color:#222;transform:scaleX(0.9693);">View</span><svg style="left:1859px;top:103px;" width="12" height="8" viewBox="0 0 12 8"><path d="M1.500 6.500 6 2l4.500 4.500" fill="none" stroke="#999" stroke-width="1.200"/></svg><svg style="left:1879px;top:98px;" width="18" height="18"><use href="#qmark"/></svg><div style="left:474px;top:119px;width:1426px;height:92px;background:#f5f6f7;"></div><div style="left:589px;top:119px;width:1311px;height:1px;background:#dadbdc;"></div><div style="left:474px;top:119px;width:57px;height:1px;background:#dadbdc;"></div><div style="left:474px;top:211px;width:1409px;height:6px;background:#c9d3e2;"></div><div style="left:581.5px;top:123px;width:1px;height:85px;background:#e1e2e3;"></div><div style="left:703px;top:123px;width:1px;height:85px;background:#e1e2e3;"></div><div style="left:783px;top:123px;width:1px;height:85px;background:#e1e2e3;"></div><div style="left:839px;top:123px;width:1px;height:85px;background:#e1e2e3;"></div><div style="left:1085px;top:123px;width:1px;height:85px;background:#e1e2e3;"></div><div style="left:1138px;top:123px;width:1px;height:85px;background:#e1e2e3;"></div><div style="left:1495px;top:123px;width:1px;height:85px;background:#e1e2e3;"></div><div style="left:1557px;top:123px;width:1px;height:85px;background:#e1e2e3;"></div><svg style="left:488px;top:126px;" width="28" height="33" viewBox="0 0 28 33"><rect x="2" y="3.500" width="24" height="28" rx="2" fill="#b98a52" stroke="#8a6434" stroke-width="1"/><rect x="5" y="7" width="18" height="22" fill="#fff" stroke="#c9c9c9" stroke-width=".6"/><path d="M7 11h14M7 14h14M7 17h14M7 20h14M7 23h14M7 26h14" stroke="#c4ccd6" stroke-width=".8"/><path d="M9 2.500h3.500C12.500 .5 15.500 .5 15.500 2.500H19l1 4H8z" fill="#8f959c" stroke="#6a7078" stroke-width=".6"/></svg><span class="t" style="left:488px;top:163.8px;font-size:12px;color:#222;transform:scaleX(0.8799);">Paste</span><svg style="left:498.8px;top:179.5px;" width="5.4" height="3" viewBox="0 0 5.4 3"><path d="M0 0h5.400L2.700 3z" fill="#222"/></svg><svg style="left:527px;top:127px;" width="14" height="16" viewBox="0 0 14 16"><path d="M3.500 1 9 11M10.500 1 5 11" stroke="#a3a3a3" stroke-width="1.300"/><circle cx="4" cy="13" r="2" fill="none" stroke="#a3a3a3" stroke-width="1.200"/><circle cx="10" cy="13" r="2" fill="none" stroke="#a3a3a3" stroke-width="1.200"/></svg><span class="t" style="left:545.5px;top:129.8px;font-size:12px;color:#a3a3a3;transform:scaleX(0.9372);">Cut</span><svg style="left:526px;top:149px;" width="16" height="16" viewBox="0 0 16 16"><path d="M1 1h6l2 2v8H1z" fill="#f2f2f2" stroke="#a3a3a3" stroke-width="1"/><path d="M6 5h6l2.500 2.500V15H6z" fill="#f7f7f7" stroke="#a3a3a3" stroke-width="1"/><path d="M8 9h4.500M8 11h4.500M8 13h4.500" stroke="#bbb" stroke-width=".8"/></svg><span class="t" style="left:545.5px;top:152px;font-size:12px;color:#a3a3a3;transform:scaleX(0.9282);">Copy</span><span class="t" style="left:502.5px;top:196.4px;font-size:12px;color:#5a5a5a;transform:scaleX(0.9735);">Clipboard</span><svg style="left:592px;top:130.5px;" width="31" height="25" viewBox="0 0 31 25"><rect x=".75" y=".75" width="29.500" height="23" fill="none" stroke="#2f6fb0" stroke-width="1.100" stroke-dasharray="2 1.300"/></svg><span class="t" style="left:591.5px;top:163.8px;font-size:12px;color:#222;transform:scaleX(0.8845);">Select</span><svg style="left:603.8px;top:179.5px;" width="5.4" height="3" viewBox="0 0 5.4 3"><path d="M0 0h5.400L2.700 3z" fill="#222"/></svg><svg style="left:633px;top:128px;" width="14" height="14" viewBox="0 0 14 14"><path d="M3.500 .5v10h10M.5 3.500h10v10M4 10 12.500 1.500" fill="none" stroke="#a3a3a3" stroke-width="1.200"/></svg><span class="t" style="left:650.5px;top:129.8px;font-size:12px;color:#a3a3a3;transform:scaleX(0.9228);">Crop</span><svg style="left:632px;top:150px;" width="15" height="14" viewBox="0 0 15 14"><path d="M4.500 1h9v8h-9z" fill="#fff" stroke="#2f5f9a" stroke-width="1.100"/><path d="M1 6.500h6v6H1z" fill="#fff" stroke="#2f5f9a" stroke-width="1.100"/></svg><span class="t" style="left:650.5px;top:152px;font-size:12px;color:#222;transform:scaleX(0.8588);">Resize</span><svg style="left:632px;top:171px;" width="16" height="15" viewBox="0 0 16 15"><path d="M7 14 7 3 1 14z" fill="#a8b4c2"/><path d="M9 14V3l5.500 11z" fill="#2f6fbf"/><path d="M3 4.500C4 1.500 8 1 10 3" fill="none" stroke="#2f5f9a" stroke-width="1.100"/><path d="M9 .5l2.500 2.800-3.300.6z" fill="#2f5f9a"/></svg><span class="t" style="left:650.5px;top:173.8px;font-size:12px;color:#222;transform:scaleX(0.9476);">Rotate</span><svg style="left:688px;top:177px;" width="6" height="4" viewBox="0 0 6 4"><path d="M0 0h6L3 3.500z" fill="#222"/></svg><span class="t" style="left:626.5px;top:196.4px;font-size:12px;color:#5a5a5a;transform:scaleX(0.9146);">Image</span><svg style="left:711px;top:134px;" width="17" height="18" viewBox="0 0 17 18"><path d="M2 16l1.500-4.500L12 3l3 3-8.500 8.500z" fill="#f2c14b" stroke="#9a7a2c" stroke-width=".8"/><path d="M12 3l1.500-1.500 3 3L15 6z" fill="#e06c5a"/><path d="M2 16l1.500-4.500 3 3z" fill="#4a4a4a"/></svg><svg style="left:734px;top:133px;" width="18" height="19" viewBox="0 0 18 19"><path d="M8 4.500 16 11l-6 6.500-7-6z" fill="#cfe0f2" stroke="#5b7fa8" stroke-width="1"/><path d="M3 11.500c-3-3-2-7 1.500-7.500 0 2-1 4 .5 6z" fill="#e4572e"/><path d="M8 4.500C7 1 11 .5 11.500 4" fill="none" stroke="#7a7a7a" stroke-width="1.100"/><path d="M5.500 10.500 10 6l4 4z" fill="#7fa8d6"/></svg><span class="t s" style="left:759px;top:132px;font-size:22px;color:#1f3a5f;font-weight:bold;">A</span><svg style="left:710px;top:164px;" width="18" height="16" viewBox="0 0 18 16"><path d="M1 10.500 11 3l6 4-10 7.500z" fill="#f08a8a" stroke="#c85a5a" stroke-width=".8"/><path d="M1 10.500 7 14.500v-1.500L1.500 9z" fill="#d96a6a"/></svg><svg style="left:735px;top:163px;" width="17" height="18" viewBox="0 0 17 18"><path d="M1.500 16.500 3 12l6.500-6.500 2 2L5 14z" fill="#dfe9f3" stroke="#5b7fa8" stroke-width=".9"/><path d="M9 4l4 4 2.500-2.500c1.500-2-1.500-5-3.500-3.500z" fill="#2f5f9a"/></svg><svg style="left:758px;top:164px;" width="18" height="18" viewBox="0 0 18 18"><circle cx="7" cy="6.500" r="5" fill="#e9f2fa" stroke="#8a9bb0" stroke-width="1.300"/><path d="M10.500 10.500 15.500 16" stroke="#9a6a3a" stroke-width="2.300"/></svg><span class="t" style="left:729px;top:196.4px;font-size:12px;color:#5a5a5a;transform:scaleX(0.9639);">Tools</span><div style="left:788.3px;top:124px;width:44.7px;height:63.5px;background:#cce4f7;border:1px solid #7eb4ea;box-sizing:border-box;"></div><div style="left:788.3px;top:161px;width:44.7px;height:1px;background:#7eb4ea;"></div><svg style="left:794px;top:127px;" width="32" height="31" viewBox="0 0 32 31"><rect x=".5" y=".5" width="31" height="30" fill="#f3f4f5" stroke="#c8cdd3" stroke-width="1"/><path d="M3 12c2 12 12 16 20 10-6 1-12-3-13-12C7 12 11 8 13 7c-4 0-8 1-10 5z" fill="#e8632a"/><path d="M30 1 19 17l3 3L31 5z" fill="#c9ced4" stroke="#8a9096" stroke-width=".6"/><path d="M19 17c-4 0-6 4-5 8 4 0 8-1 8-5z" fill="#a36a3a"/></svg><span class="t" style="left:790.5px;top:163.8px;font-size:12px;color:#222;transform:scaleX(0.8746);">Brushes</span><svg style="left:806.8px;top:179.5px;" width="5.4" height="3" viewBox="0 0 5.4 3"><path d="M0 0h5.400L2.700 3z" fill="#222"/></svg><div style="left:846px;top:128px;width:155px;height:58.5px;background:#fbfcfd;border:1px solid #dadbdc;box-sizing:border-box;"></div><div style="left:988px;top:129px;width:1px;height:56.5px;background:#e3e4e5;"></div><svg style="left:848px;top:129.5px;" width="16" height="16" viewBox="0 0 16 16"><path d="M1 1l14 11" fill="none" stroke="#2f6fa8" stroke-width="1"/></svg><svg style="left:868px;top:129.5px;" width="16" height="16" viewBox="0 0 16 16"><path d="M1 12C3 2 6 2 8 7s5 5 7-5" fill="none" stroke="#2f6fa8" stroke-width="1"/></svg><svg style="left:888px;top:129.5px;" width="16" height="16" viewBox="0 0 16 16"><ellipse cx="8" cy="7" rx="7" ry="5.500" fill="#eef5fb" stroke="#2f6fa8" stroke-width="1"/></svg><svg style="left:908px;top:129.5px;" width="16" height="16" viewBox="0 0 16 16"><rect x="1.500" y="2" width="13" height="10" fill="#eef5fb" stroke="#2f6fa8" stroke-width="1"/></svg><svg style="left:928px;top:129.5px;" width="16" height="16" viewBox="0 0 16 16"><rect x="1.500" y="2" width="13" height="10" rx="2.500" fill="#eef5fb" stroke="#2f6fa8" stroke-width="1"/></svg><svg style="left:948px;top:129.5px;" width="16" height="16" viewBox="0 0 16 16"><path d="M4.500 2h7l-1 5h4.500v5H1.500z" fill="#eef5fb" stroke="#2f6fa8" stroke-width="1"/></svg><svg style="left:968px;top:129.5px;" width="16" height="16" viewBox="0 0 16 16"><path d="M8 1.500 14.500 12.500h-13z" fill="#eef5fb" stroke="#2f6fa8" stroke-width="1"/></svg><svg style="left:848px;top:149px;" width="16" height="16" viewBox="0 0 16 16"><path d="M1.500 1.500v12h13z" fill="#eef5fb" stroke="#2f6fa8" stroke-width="1"/></svg><svg style="left:868px;top:149px;" width="16" height="16" viewBox="0 0 16 16"><path d="M8 1 14.500 7.500 8 14 1.500 7.500z" fill="#eef5fb" stroke="#2f6fa8" stroke-width="1"/></svg><svg style="left:888px;top:149px;" width="16" height="16" viewBox="0 0 16 16"><path d="M8 1.500l7 5-2.700 7.500H3.700L1 6.500z" fill="#eef5fb" stroke="#2f6fa8" stroke-width="1"/></svg><svg style="left:908px;top:149px;" width="16" height="16" viewBox="0 0 16 16"><path d="M8 1l6 3.300v6.900L8 14.500 2 11.200V4.300z" fill="#eef5fb" stroke="#2f6fa8" stroke-width="1"/></svg><svg style="left:928px;top:149px;" width="16" height="16" viewBox="0 0 16 16"><path d="M1.500 5h7V1.500L15 7.500 8.500 13.500V10h-7z" fill="#eef5fb" stroke="#2f6fa8" stroke-width="1"/></svg><svg style="left:948px;top:149px;" width="16" height="16" viewBox="0 0 16 16"><path d="M14.500 5h-7V1.500L1 7.500l6.500 6V10h7z" fill="#eef5fb" stroke="#2f6fa8" stroke-width="1"/></svg><svg style="left:968px;top:149px;" width="16" height="16" viewBox="0 0 16 16"><path d="M8 1 14.500 7.500H11V14H5V7.500H1.500z" fill="#eef5fb" stroke="#2f6fa8" stroke-width="1"/></svg><svg style="left:848px;top:168.5px;" width="16" height="16" viewBox="0 0 16 16"><path d="M8 14.500 1.500 8H5V1.500h6V8h3.500z" fill="#eef5fb" stroke="#2f6fa8" stroke-width="1"/></svg><svg style="left:868px;top:168.5px;" width="16" height="16" viewBox="0 0 16 16"><path d="M8 1l1.800 5.200L15 8l-5.200 1.800L8 15 6.200 9.800 1 8l5.200-1.800z" fill="#eef5fb" stroke="#2f6fa8" stroke-width="1"/></svg><svg style="left:888px;top:168.5px;" width="16" height="16" viewBox="0 0 16 16"><path d="M8 1l2 4.800 5 .4-3.800 3.300 1.200 5L8 11.800 3.600 14.500l1.200-5L1 6.200l5-.4z" fill="#eef5fb" stroke="#2f6fa8" stroke-width="1"/></svg><svg style="left:908px;top:168.5px;" width="16" height="16" viewBox="0 0 16 16"><path d="M8 .8l2.200 3.500h4L12.200 8l2 3.700h-4L8 15.200l-2.200-3.500h-4L3.800 8l-2-3.700h4z" fill="#eef5fb" stroke="#2f6fa8" stroke-width="1"/></svg><svg style="left:928px;top:168.5px;" width="16" height="16" viewBox="0 0 16 16"><path d="M3 2h10c1 0 1.500.5 1.500 1.500v6c0 1-.5 1.500-1.500 1.500H7l-3 3v-3H3c-1 0-1.500-.5-1.500-1.500v-6C1.500 2.500 2 2 3 2z" fill="#eef5fb" stroke="#2f6fa8" stroke-width="1"/></svg><svg style="left:948px;top:168.5px;" width="16" height="16" viewBox="0 0 16 16"><path d="M8 2c4 0 7 2 7 4.700S12 11.500 8 11.500c-.8 0-1.500 0-2.200-.2L3 14l.5-3.500C2 9.500 1 8.200 1 6.700 1 4 4 2 8 2z" fill="#eef5fb" stroke="#2f6fa8" stroke-width="1"/></svg><svg style="left:968px;top:168.5px;" width="16" height="16" viewBox="0 0 16 16"><path d="M4 3c1-1.500 3-1.500 4-.5 1.200-1 3-.8 3.800.5 1.700 0 2.800 1.300 2.200 2.800 1 1 .8 2.700-.5 3.400 0 1.500-1.500 2.300-3 1.800-1 1.300-3 1.300-4 .2-1.500.6-3-.2-3.200-1.600C1.800 9 1.300 7.300 2.300 6.200 1.700 4.700 2.600 3.200 4 3z" fill="#eef5fb" stroke="#2f6fa8" stroke-width="1"/></svg><svg style="left:991px;top:135px;" width="7" height="4" viewBox="0 0 7 4"><path d="M0 4h7L3.500 0z" fill="#b5b5b5"/></svg><svg style="left:991px;top:155px;" width="7" height="4" viewBox="0 0 7 4"><path d="M0 0h7L3.500 4z" fill="#444"/></svg><div style="left:991px;top:172.5px;width:7px;height:1.2px;background:#444;"></div><svg style="left:991px;top:175.5px;" width="7" height="4" viewBox="0 0 7 4"><path d="M0 0h7L3.500 4z" fill="#444"/></svg><svg style="left:1007px;top:128px;" width="17" height="15" viewBox="0 0 17 15"><path d="M1 3.500h9M1 3.500v10h11V9" fill="none" stroke="#a3a3a3" stroke-width="1.200"/><path d="M5 11l1-3.500L13.500 1l2 2L8.500 10z" fill="#e8e8e8" stroke="#a3a3a3" stroke-width="1"/></svg><span class="t" style="left:1028px;top:129.8px;font-size:12px;color:#a3a3a3;transform:scaleX(0.9863);">Outline</span><svg style="left:1070px;top:133.5px;" width="6" height="4" viewBox="0 0 6 4"><path d="M0 0h6L3 3.500z" fill="#a3a3a3"/></svg><svg style="left:1007px;top:149px;" width="17" height="16" viewBox="0 0 17 16"><path d="M7.500 2 14 9l-5 5-7-5z" fill="#d5dbe6" stroke="#a9b2c4" stroke-width="1"/><path d="M1 13h15v2.500H1z" fill="#b8c1d4"/><path d="M7.500 2C7 0 10 0 10 2.500" fill="none" stroke="#a9b2c4" stroke-width="1"/></svg><span class="t" style="left:1028px;top:152px;font-size:12px;color:#a3a3a3;transform:scaleX(0.9134);">Fill</span><svg style="left:1046.5px;top:155.5px;" width="6" height="4" viewBox="0 0 6 4"><path d="M0 0h6L3 3.500z" fill="#a3a3a3"/></svg><span class="t" style="left:944px;top:196.4px;font-size:12px;color:#5a5a5a;transform:scaleX(0.8846);">Shapes</span><div style="left:1095px;top:128.2px;width:32px;height:1px;background:#1f3a5f;"></div><div style="left:1095px;top:132.3px;width:32px;height:2.3px;background:#1f3a5f;"></div><div style="left:1095px;top:140.3px;width:32px;height:3.7px;background:#1f3a5f;"></div><div style="left:1095px;top:148.2px;width:32px;height:6.5px;background:#1f3a5f;"></div><span class="t" style="left:1100.5px;top:163.8px;font-size:12px;color:#222;transform:scaleX(0.8353);">Size</span><svg style="left:1107.8px;top:179.5px;" width="5.4" height="3" viewBox="0 0 5.4 3"><path d="M0 0h5.400L2.700 3z" fill="#222"/></svg><div style="left:1143px;top:124px;width:42.5px;height:65px;background:#cce4f7;border:1px solid #7eb4ea;box-sizing:border-box;"></div><div style="left:1148.5px;top:127.5px;width:31.5px;height:31px;background:#000;border:1px solid #8c96a2;box-shadow:inset 0 0 0 1px #59626d;box-sizing:border-box;"></div><div style="left:1150.5px;top:129.5px;width:27.5px;height:27px;background:#000;"></div><span class="t" style="left:1150.5px;top:163.8px;font-size:12px;color:#222;transform:scaleX(0.9416);">Color</span><span class="t" style="left:1161.33px;top:176.8px;font-size:12px;color:#222;transform:scaleX(0.9500);">1</span><div style="left:1194px;top:131px;width:24.5px;height:24px;background:#fff;border:1px solid #9a9a9a;box-sizing:border-box;"></div><span class="t" style="left:1192px;top:163.8px;font-size:12px;color:#222;transform:scaleX(0.9416);">Color</span><span class="t" style="left:1202.33px;top:176.8px;font-size:12px;color:#222;transform:scaleX(0.9500);">2</span><div style="left:1228px;top:125.5px;width:20px;height:19.5px;background:#000000;border:1px solid #a0a0a0;box-shadow:inset 0 0 0 1px #f5f6f7;box-sizing:border-box;"></div><div style="left:1228px;top:147.5px;width:20px;height:19.5px;background:#ffffff;border:1px solid #a0a0a0;box-shadow:inset 0 0 0 1px #f5f6f7;box-sizing:border-box;"></div><div style="left:1228px;top:169.5px;width:20px;height:19.5px;background:#f5f6f7;border:1px solid #c4c4c4;box-sizing:border-box;"></div><div style="left:1250px;top:125.5px;width:20px;height:19.5px;background:#7f7f7f;border:1px solid #a0a0a0;box-shadow:inset 0 0 0 1px #f5f6f7;box-sizing:border-box;"></div><div style="left:1250px;top:147.5px;width:20px;height:19.5px;background:#c3c3c3;border:1px solid #a0a0a0;box-shadow:inset 0 0 0 1px #f5f6f7;box-sizing:border-box;"></div><div style="left:1250px;top:169.5px;width:20px;height:19.5px;background:#f5f6f7;border:1px solid #c4c4c4;box-sizing:border-box;"></div><div style="left:1272px;top:125.5px;width:20px;height:19.5px;background:#880015;border:1px solid #a0a0a0;box-shadow:inset 0 0 0 1px #f5f6f7;box-sizing:border-box;"></div><div style="left:1272px;top:147.5px;width:20px;height:19.5px;background:#b97a57;border:1px solid #a0a0a0;box-shadow:inset 0 0 0 1px #f5f6f7;box-sizing:border-box;"></div><div style="left:1272px;top:169.5px;width:20px;height:19.5px;background:#f5f6f7;border:1px solid #c4c4c4;box-sizing:border-box;"></div><div style="left:1294px;top:125.5px;width:20px;height:19.5px;background:#ed1c24;border:1px solid #a0a0a0;box-shadow:inset 0 0 0 1px #f5f6f7;box-sizing:border-box;"></div><div style="left:1294px;top:147.5px;width:20px;height:19.5px;background:#ffaec9;border:1px solid #a0a0a0;box-shadow:inset 0 0 0 1px #f5f6f7;box-sizing:border-box;"></div><div style="left:1294px;top:169.5px;width:20px;height:19.5px;background:#f5f6f7;border:1px solid #c4c4c4;box-sizing:border-box;"></div><div style="left:1316px;top:125.5px;width:20px;height:19.5px;background:#ff7f27;border:1px solid #a0a0a0;box-shadow:inset 0 0 0 1px #f5f6f7;box-sizing:border-box;"></div><div style="left:1316px;top:147.5px;width:20px;height:19.5px;background:#ffc90e;border:1px solid #a0a0a0;box-shadow:inset 0 0 0 1px #f5f6f7;box-sizing:border-box;"></div><div style="left:1316px;top:169.5px;width:20px;height:19.5px;background:#f5f6f7;border:1px solid #c4c4c4;box-sizing:border-box;"></div><div style="left:1338px;top:125.5px;width:20px;height:19.5px;background:#fff200;border:1px solid #a0a0a0;box-shadow:inset 0 0 0 1px #f5f6f7;box-sizing:border-box;"></div><div style="left:1338px;top:147.5px;width:20px;height:19.5px;background:#efe4b0;border:1px solid #a0a0a0;box-shadow:inset 0 0 0 1px #f5f6f7;box-sizing:border-box;"></div><div style="left:1338px;top:169.5px;width:20px;height:19.5px;background:#f5f6f7;border:1px solid #c4c4c4;box-sizing:border-box;"></div><div style="left:1360px;top:125.5px;width:20px;height:19.5px;background:#22b14c;border:1px solid #a0a0a0;box-shadow:inset 0 0 0 1px #f5f6f7;box-sizing:border-box;"></div><div style="left:1360px;top:147.5px;width:20px;height:19.5px;background:#b5e61d;border:1px solid #a0a0a0;box-shadow:inset 0 0 0 1px #f5f6f7;box-sizing:border-box;"></div><div style="left:1360px;top:169.5px;width:20px;height:19.5px;background:#f5f6f7;border:1px solid #c4c4c4;box-sizing:border-box;"></div><div style="left:1382px;top:125.5px;width:20px;height:19.5px;background:#00a2e8;border:1px solid #a0a0a0;box-shadow:inset 0 0 0 1px #f5f6f7;box-sizing:border-box;"></div><div style="left:1382px;top:147.5px;width:20px;height:19.5px;background:#99d9ea;border:1px solid #a0a0a0;box-shadow:inset 0 0 0 1px #f5f6f7;box-sizing:border-box;"></div><div style="left:1382px;top:169.5px;width:20px;height:19.5px;background:#f5f6f7;border:1px solid #c4c4c4;box-sizing:border-box;"></div><div style="left:1404px;top:125.5px;width:20px;height:19.5px;background:#3f48cc;border:1px solid #a0a0a0;box-shadow:inset 0 0 0 1px #f5f6f7;box-sizing:border-box;"></div><div style="left:1404px;top:147.5px;width:20px;height:19.5px;background:#7092be;border:1px solid #a0a0a0;box-shadow:inset 0 0 0 1px #f5f6f7;box-sizing:border-box;"></div><div style="left:1404px;top:169.5px;width:20px;height:19.5px;background:#f5f6f7;border:1px solid #c4c4c4;box-sizing:border-box;"></div><div style="left:1426px;top:125.5px;width:20px;height:19.5px;background:#a349a4;border:1px solid #a0a0a0;box-shadow:inset 0 0 0 1px #f5f6f7;box-sizing:border-box;"></div><div style="left:1426px;top:147.5px;width:20px;height:19.5px;background:#c8bfe7;border:1px solid #a0a0a0;box-shadow:inset 0 0 0 1px #f5f6f7;box-sizing:border-box;"></div><div style="left:1426px;top:169.5px;width:20px;height:19.5px;background:#f5f6f7;border:1px solid #c4c4c4;box-sizing:border-box;"></div><svg style="left:1453.5px;top:128.5px;" width="28.5" height="28.5" viewBox="0 0 28.5 28.5"><rect x=".5" y=".5" width="27.500" height="27.500" fill="#fff" stroke="#b5b5b5"/><rect x="2.500" y="2.500" width="23.500" height="23.500" fill="url(#gRain)"/><rect x="2.500" y="2.500" width="23.500" height="23.500" fill="url(#gRainV)"/></svg><span class="t" style="left:1458.25px;top:163.8px;font-size:12px;color:#222;transform:scaleX(0.9431);">Edit</span><span class="t" style="left:1453px;top:176.8px;font-size:12px;color:#222;transform:scaleX(0.9373);">colors</span><span class="t" style="left:1300px;top:196.4px;font-size:12px;color:#5a5a5a;transform:scaleX(0.9085);">Colors</span><svg style="left:1510px;top:128px;" width="30" height="30" viewBox="0 0 30 30"><rect x=".5" y=".5" width="29" height="29" fill="#fbfbfc" stroke="#d5d8dc"/><path d="M15 3.500c5 0 8.500 3.500 8.500 8 0 4-3 6-5 8.500-1.200 1.500-1.500 3-1.500 4.500-2 0-3.500-1.500-3.500-3.500 0-1.500-1-2.500-3-4-2.500-1.800-4-3.500-4-6 0-4.500 3.500-7.500 8.500-7.500z" fill="url(#gP3d)"/></svg><span class="t" style="left:1502.75px;top:163.8px;font-size:12px;color:#222;transform:scaleX(0.9812);">Edit with</span><span class="t" style="left:1504px;top:176.8px;font-size:12px;color:#222;transform:scaleX(0.9126);">Paint 3D</span><div style="left:480px;top:216px;width:1403px;height:647px;overflow:hidden;"><div style="left:-480px;top:-216px;width:1920px;height:1200px;"><div style="left:480px;top:217px;width:1403px;height:646px;background:#fff;"></div><div style="left:1321px;top:216px;width:46px;height:2px;background:#2a6fb5;"></div><svg style="left:482px;top:220.3px;" width="13" height="16" viewBox="0 0 13 16"><path d="M0 0h11.500v15.500H0z" fill="#fbe59f"/><path d="M0 0h11.500v15.500H0z" fill="none" stroke="#f2d67e" stroke-width=".6"/><path d="M10 9h3v6.700h-3z" fill="#f4cf63"/></svg><div style="left:503px;top:222px;width:1px;height:14px;background:#c0c0c0;"></div><svg style="left:514px;top:221px;" width="14" height="16" viewBox="0 0 14 16"><path d="M1 .5h8.500l3 3V15.500H1z" fill="#fff" stroke="#7a7a7a" stroke-width="1"/><path d="M3.500 8.500 6 11l4.500-6" fill="none" stroke="#d8432a" stroke-width="1.400"/></svg><svg style="left:537px;top:221px;" width="13" height="16" viewBox="0 0 13 16"><path d="M0 0h11.500v15.500H0z" fill="#fbe59f"/><path d="M0 0h11.500v15.500H0z" fill="none" stroke="#f2d67e" stroke-width=".6"/><path d="M10 9h3v6.700h-3z" fill="#f4cf63"/></svg><div style="left:557.5px;top:226.5px;width:7px;height:1.2px;background:#111;"></div><svg style="left:557.5px;top:229.5px;" width="7" height="4" viewBox="0 0 7 4"><path d="M0 0h7L3.500 4z" fill="#111"/></svg><div style="left:573px;top:222px;width:1px;height:14px;background:#c0c0c0;"></div><span class="t" style="left:581px;top:223.3px;font-size:12px;color:#8f8f8f;transform:scaleX(0.8592);">Save</span><div style="left:480px;top:240.3px;width:56px;height:22.5px;background:#1666b8;"></div><span class="t" style="left:499px;top:246.3px;font-size:12px;color:#fff;transform:scaleX(0.9568);">File</span><span class="t" style="left:550px;top:246.3px;font-size:12px;color:#222;transform:scaleX(0.9373);">Home</span><span class="t" style="left:609px;top:246.3px;font-size:12px;color:#222;transform:scaleX(0.9057);">Share</span><span class="t" style="left:667.5px;top:246.3px;font-size:12px;color:#222;transform:scaleX(0.9693);">View</span><div style="left:480px;top:263.5px;width:1403px;height:1px;background:#e3e3e3;"></div><svg style="left:492px;top:275px;" width="14" height="12" viewBox="0 0 14 12"><path d="M13 6H1.500M6 1.500 1.500 6 6 10.500" fill="none" stroke="#c6c6c6" stroke-width="1.200"/></svg><svg style="left:521px;top:275px;" width="14" height="12" viewBox="0 0 14 12"><path d="M1 6h11.500M8 1.500 12.500 6 8 10.500" fill="none" stroke="#c6c6c6" stroke-width="1.300"/></svg><svg style="left:547px;top:279px;" width="8" height="5" viewBox="0 0 8 5"><path d="M1 1l3 3 3-3" fill="none" stroke="#c8c8c8" stroke-width="1.100"/></svg><svg style="left:566px;top:274px;" width="12" height="14" viewBox="0 0 12 14"><path d="M6 13V1.500M1.500 6 6 1.500 10.500 6" fill="none" stroke="#555" stroke-width="1.300"/></svg><div style="left:586px;top:270px;width:1300px;height:22px;background:#fff;border:1px solid #d9d9d9;box-sizing:border-box;"></div><svg style="left:591px;top:272px;" width="13" height="16" viewBox="0 0 13 16"><path d="M0 0h11.500v15.500H0z" fill="#fbe59f"/><path d="M0 0h11.500v15.500H0z" fill="none" stroke="#f2d67e" stroke-width=".6"/><path d="M10 9h3v6.700h-3z" fill="#f4cf63"/></svg><svg style="left:611px;top:277px;" width="5" height="8" viewBox="0 0 5 8"><path d="M1 1l3 3-3 3" fill="none" stroke="#555" stroke-width="1.100"/></svg><span class="t" style="left:626px;top:275.3px;font-size:12px;color:#111;transform:scaleX(0.8958);">Save</span><div style="left:480px;top:315.3px;width:387px;height:23.2px;background:#d9d9d9;"></div><svg style="left:504px;top:319px;" width="16" height="16" viewBox="0 0 16 16"><path d="M9 1l2.200 4.800 5 .5-3.800 3.400 1.100 5L9 12.200 4.500 14.700l1.100-5L1.800 6.300l5-.5z" fill="#3f9ae5"/><path d="M1 9.500h4M2 12.500h3" stroke="#3f9ae5" stroke-width="1.200"/></svg><span class="t" style="left:525px;top:321.3px;font-size:12px;color:#111;transform:scaleX(0.9600);">Quick access</span><svg style="left:512.3px;top:345px;" width="16" height="12" viewBox="0 0 16 12"><rect x="0" y="0" width="15.600" height="12" fill="#1e90ea"/><path d="M.8 10.300h14" stroke="#bfe4ff" stroke-width=".9" stroke-dasharray="1.200 .7"/></svg><span class="t" style="left:533px;top:345.3px;font-size:12px;color:#111;transform:scaleX(0.9655);">Desktop</span><svg style="left:511.5px;top:366.8px;" width="17" height="16" viewBox="0 0 17 16"><path d="M5.500 0h6v7h5L8.500 15.500.5 7h5z" fill="#3a8fe0"/></svg><span class="t" style="left:533px;top:369.3px;font-size:12px;color:#111;">Downloads</span><svg style="left:513px;top:391px;" width="13" height="16" viewBox="0 0 13 16"><path d="M.5 .5h8.500l3.500 3.500V15.500H.5z" fill="#fff" stroke="#7a8a9a" stroke-width="1"/><path d="M2.500 6h8M2.500 8.500h8M2.500 11h8M2.500 13.500h8" stroke="#5a8fcf" stroke-width=".9"/><path d="M2.500 3h4" stroke="#5a8fcf" stroke-width="1.200"/></svg><span class="t" style="left:533px;top:393.3px;font-size:12px;color:#111;transform:scaleX(1.0051);">Documents</span><svg style="left:511px;top:416px;" width="17" height="14" viewBox="0 0 17 14"><rect x=".5" y=".5" width="16" height="12.500" fill="#eaf3fb" stroke="#7a8a9a" stroke-width="1"/><path d="M2 11.500V5h13v6.500z" fill="#8ec2ea"/><path d="M2 11.500l4-4 3 2.500 2.500-2 3.500 3.500z" fill="#3f6f5a"/></svg><span class="t" style="left:533px;top:417.3px;font-size:12px;color:#111;transform:scaleX(0.9805);">Pictures</span><svg style="left:853px;top:345.5px;" width="10" height="11" viewBox="0 0 10 11"><path d="M5.500 .5 9.500 4.500 8 5 6 7l.5 2.500L3 6 .5 10 2.500 5.500.5 3.500l2.500.5L5 2z" fill="#9a9a9a"/></svg><svg style="left:853px;top:369.5px;" width="10" height="11" viewBox="0 0 10 11"><path d="M5.500 .5 9.500 4.500 8 5 6 7l.5 2.500L3 6 .5 10 2.500 5.500.5 3.500l2.500.5L5 2z" fill="#9a9a9a"/></svg><svg style="left:853px;top:393.5px;" width="10" height="11" viewBox="0 0 10 11"><path d="M5.500 .5 9.500 4.500 8 5 6 7l.5 2.500L3 6 .5 10 2.500 5.500.5 3.500l2.500.5L5 2z" fill="#9a9a9a"/></svg><svg style="left:853px;top:417.5px;" width="10" height="11" viewBox="0 0 10 11"><path d="M5.500 .5 9.500 4.500 8 5 6 7l.5 2.500L3 6 .5 10 2.500 5.500.5 3.500l2.500.5L5 2z" fill="#9a9a9a"/></svg><div style="left:870px;top:296px;width:1px;height:170px;background:#f0f0f0;"></div><span class="t" style="left:888px;top:306.3px;font-size:12px;color:#4c607a;">Name</span><svg style="left:1008px;top:298px;" width="9" height="6" viewBox="0 0 9 6"><path d="M1 5l3.500-3.500L8 5" fill="none" stroke="#666" stroke-width="1"/></svg><span class="t" style="left:1149px;top:306.3px;font-size:12px;color:#4c607a;transform:scaleX(1.0130);">Date modified</span><span class="t" style="left:1293px;top:306.3px;font-size:12px;color:#4c607a;">Type</span><span class="t" style="left:1413px;top:306.3px;font-size:12px;color:#4c607a;transform:scaleX(0.8996);">Size</span><div style="left:1142px;top:299px;width:1px;height:25px;background:#e8e8e8;"></div><div style="left:1286px;top:299px;width:1px;height:25px;background:#e8e8e8;"></div><div style="left:1406px;top:299px;width:1px;height:25px;background:#e8e8e8;"></div><div style="left:1486px;top:299px;width:1px;height:25px;background:#e8e8e8;"></div><div style="left:885px;top:393.5px;width:598px;height:21px;background:#d9d9d9;"></div><svg style="left:890px;top:332.7px;" width="12" height="15" viewBox="0 0 12 15"><path d="M.5 .5h7.500l3 3V14.500H.5z" fill="#fff" stroke="#8a8a8a" stroke-width="1"/><circle cx="6" cy="9.500" r="3.600" fill="#e33b2e"/><path d="M6 9.500 2.800 11.500A3.600 3.600 0 0 0 9.300 11z" fill="#2da94f"/><path d="M6 9.500h3.600A3.600 3.600 0 0 1 7.500 12.800z" fill="#fbc116"/><circle cx="6" cy="9.500" r="1.500" fill="#4688f1" stroke="#fff" stroke-width=".6"/></svg><span class="t" style="left:909px;top:335px;font-size:12px;color:#111;transform:scaleX(1.0240);">index.html</span><span class="t" style="left:1149px;top:335px;font-size:12px;color:#6d6d6d;transform:scaleX(0.9728);">10/7/2025 5:26 AM</span><span class="t" style="left:1293px;top:335px;font-size:12px;color:#6d6d6d;transform:scaleX(0.9822);">Chrome HTML Do...</span><span class="t" style="left:1448.58px;top:335px;font-size:12px;color:#6d6d6d;transform:scaleX(0.9000);">31 KB</span><svg style="left:890px;top:353.7px;" width="12" height="15" viewBox="0 0 12 15"><path d="M.5 .5h7.500l3 3V14.500H.5z" fill="#fff" stroke="#8a8a8a" stroke-width="1"/><circle cx="5" cy="7" r="2.500" fill="none" stroke="#8a9aaa" stroke-width="1"/><circle cx="7" cy="10" r="2" fill="none" stroke="#8a9aaa" stroke-width="1"/></svg><span class="t" style="left:909px;top:356px;font-size:12px;color:#111;transform:scaleX(1.0391);">inventory.db</span><span class="t" style="left:1149px;top:356px;font-size:12px;color:#6d6d6d;transform:scaleX(0.9566);">10/7/2025 3:44 PM</span><span class="t" style="left:1293px;top:356px;font-size:12px;color:#6d6d6d;transform:scaleX(0.9149);">Data Base File</span><span class="t" style="left:1448.58px;top:356px;font-size:12px;color:#6d6d6d;transform:scaleX(0.9000);">12 KB</span><svg style="left:890px;top:374.7px;" width="12" height="15" viewBox="0 0 12 15"><path d="M.5 .5h7.500l3 3V14.500H.5z" fill="#fff" stroke="#8a8a8a" stroke-width="1"/><path d="M2.500 5h6.500M2.500 7h6.500M2.500 9h6.500M2.500 11h6.500" stroke="#9a9a9a" stroke-width=".8"/></svg><span class="t" style="left:909px;top:377px;font-size:12px;color:#111;">replenish_tool_gui.jpg.txt</span><span class="t" style="left:1149px;top:377px;font-size:12px;color:#6d6d6d;transform:scaleX(0.9610);">10/5/2025 11:01 PM</span><span class="t" style="left:1293px;top:377px;font-size:12px;color:#6d6d6d;">Text Document</span><span class="t" style="left:1454.59px;top:377px;font-size:12px;color:#6d6d6d;transform:scaleX(0.9000);">0 KB</span><svg style="left:890px;top:395.7px;" width="12" height="15" viewBox="0 0 12 15"><path d="M.5 .5h7.500l3 3V14.500H.5z" fill="#fff" stroke="#8a8a8a" stroke-width="1"/><path d="M6 5.500c-2 0-2.500.5-2.500 1.500v1.500H6v.5H3c-1 0-1.500 1-1.500 2s.5 2 1.500 2h1v-1.500c0-.8.600-1.500 1.500-1.500h2c.8 0 1.300-.5 1.300-1.300V7c0-1-.8-1.500-2.800-1.500z" fill="#3a76ab"/><path d="M7.500 14.500c2 0 2.500-.5 2.500-1.500v-1.500H7.500V11h3c1 0 1.500-1 1.500-2S11.500 7 10.500 7h-1v1.500c0 .8-.6 1.500-1.500 1.500H6c-.8 0-1.300.5-1.300 1.300V13c0 1 .8 1.500 2.800 1.500z" fill="#f6cf45"/></svg><span class="t" style="left:909px;top:398px;font-size:12px;color:#111;transform:scaleX(0.9895);">smartGui.py</span><span class="t" style="left:1149px;top:398px;font-size:12px;color:#6d6d6d;transform:scaleX(0.9682);">10/6/2025 12:24 AM</span><span class="t" style="left:1293px;top:398px;font-size:12px;color:#6d6d6d;transform:scaleX(0.9829);">Python File</span><span class="t" style="left:1454.59px;top:398px;font-size:12px;color:#6d6d6d;transform:scaleX(0.9000);">9 KB</span><svg style="left:890px;top:416.7px;" width="12" height="15" viewBox="0 0 12 15"><path d="M.5 .5h7.500l3 3V14.500H.5z" fill="#fff" stroke="#8a8a8a" stroke-width="1"/><path d="M2.500 5h6.500M2.500 7h6.500M2.500 9h6.500M2.500 11h6.500" stroke="#9a9a9a" stroke-width=".8"/></svg><span class="t" style="left:909px;top:419px;font-size:12px;color:#111;transform:scaleX(0.9927);">WH_AppScript.txt</span><span class="t" style="left:1149px;top:419px;font-size:12px;color:#6d6d6d;transform:scaleX(0.9682);">10/6/2025 12:43 AM</span><span class="t" style="left:1293px;top:419px;font-size:12px;color:#6d6d6d;">Text Document</span><span class="t" style="left:1448.58px;top:419px;font-size:12px;color:#6d6d6d;transform:scaleX(0.9000);">16 KB</span><span class="t" style="left:1293px;top:440px;font-size:12px;color:#6d6d6d;">Text Document</span><span class="t" style="left:1454.59px;top:440px;font-size:12px;color:#6d6d6d;transform:scaleX(0.9000);">0 KB</span><div style="left:481.5px;top:436.5px;width:802px;height:430px;background:#fff;border:1px solid #9c9c9c;box-sizing:border-box;box-shadow:0 2px 10px rgba(0,0,0,.25);"></div><svg style="left:493px;top:444px;" width="10" height="17" viewBox="0 0 10 17"><path d="M8.500 .5C4 2 1.500 6.500 2 12l-1.500 4.500" fill="none" stroke="#1a1a2a" stroke-width="1"/><path d="M8.500 .5C9.500 5 7.500 10 2.200 12.500 1.500 7 4 2 8.500 .5z" fill="#4f6fae"/><path d="M7.800 2.500 3 11" stroke="#1a1a2a" stroke-width=".8"/></svg><span class="t" style="left:512px;top:447px;font-size:12px;color:#999;transform:scaleX(0.9936);">Inventory Management System</span><svg style="left:1163.5px;top:446.5px;" width="12" height="12" viewBox="0 0 12 12"><path d="M0 6.500h11" stroke="#8a8a8a" stroke-width="1"/></svg><svg style="left:1209px;top:447px;" width="12" height="12" viewBox="0 0 12 12"><path d="M.5.5h9.500v9.500H.5z" fill="none" stroke="#8a8a8a" stroke-width="1"/></svg><svg style="left:1254px;top:447px;" width="12" height="12" viewBox="0 0 12 12"><path d="M.5.5l10.500 10.500M11 .5.5 11" stroke="#8a8a8a" stroke-width="1"/></svg><div style="left:483px;top:468.5px;width:799px;height:1px;background:#828790;"></div><div style="left:483px;top:468.5px;width:1px;height:394px;background:#828790;"></div><div style="left:1281px;top:468.5px;width:1px;height:175px;background:#828790;"></div><div style="left:591px;top:470px;width:1px;height:23px;background:#e5e5e5;"></div><div style="left:837px;top:470px;width:1px;height:23px;background:#e5e5e5;"></div><div style="left:1011px;top:470px;width:1px;height:23px;background:#e5e5e5;"></div><div style="left:1175px;top:470px;width:1px;height:23px;background:#e5e5e5;"></div><span class="t" style="left:531.25px;top:474.8px;font-size:12px;color:#111;transform:scaleX(0.9583);">ID</span><span class="t" style="left:699px;top:474.8px;font-size:12px;color:#111;">Name</span><span class="t" style="left:909.25px;top:474.8px;font-size:12px;color:#111;transform:scaleX(0.9830);">Stock</span><span class="t" style="left:1058px;top:474.8px;font-size:12px;color:#111;transform:scaleX(0.9725);">Reorder Point</span><span class="t" style="left:1215.75px;top:474.8px;font-size:12px;color:#111;transform:scaleX(0.9693);">Price</span><span class="t" style="left:488.5px;top:496.7px;font-size:12px;color:#111;transform:scaleX(0.8991);">1</span><span class="t" style="left:596px;top:496.7px;font-size:12px;color:#111;transform:scaleX(0.9789);">Rice</span><span class="t" style="left:842.5px;top:496.7px;font-size:12px;color:#111;transform:scaleX(0.9366);">70</span><span class="t" style="left:1016.5px;top:496.7px;font-size:12px;color:#111;transform:scaleX(0.9366);">10</span><span class="t" style="left:1180.5px;top:496.7px;font-size:12px;color:#111;transform:scaleX(0.8992);">50.0</span><span class="t" style="left:488.5px;top:516.7px;font-size:12px;color:#111;transform:scaleX(0.8991);">2</span><span class="t" style="left:596px;top:516.7px;font-size:12px;color:#111;transform:scaleX(1.0412);">oil</span><span class="t" style="left:842.5px;top:516.7px;font-size:12px;color:#111;transform:scaleX(0.9366);">65</span><span class="t" style="left:1016.5px;top:516.7px;font-size:12px;color:#111;transform:scaleX(0.9366);">25</span><span class="t" style="left:1180.5px;top:516.7px;font-size:12px;color:#111;transform:scaleX(0.8992);">70.0</span><span class="t" style="left:488.5px;top:536.7px;font-size:12px;color:#111;transform:scaleX(0.8991);">3</span><span class="t" style="left:596px;top:536.7px;font-size:12px;color:#111;transform:scaleX(0.9662);">sugar</span><span class="t" style="left:842.5px;top:536.7px;font-size:12px;color:#111;transform:scaleX(0.9366);">78</span><span class="t" style="left:1016.5px;top:536.7px;font-size:12px;color:#111;transform:scaleX(0.9366);">20</span><span class="t" style="left:1180.5px;top:536.7px;font-size:12px;color:#111;transform:scaleX(0.8992);">70.0</span><span class="t" style="left:488.5px;top:556.7px;font-size:12px;color:#111;transform:scaleX(0.8991);">4</span><span class="t" style="left:596px;top:556.7px;font-size:12px;color:#111;transform:scaleX(0.9608);">soap</span><span class="t" style="left:842.5px;top:556.7px;font-size:12px;color:#111;transform:scaleX(0.9366);">67</span><span class="t" style="left:1016.5px;top:556.7px;font-size:12px;color:#111;transform:scaleX(0.9366);">25</span><span class="t" style="left:1180.5px;top:556.7px;font-size:12px;color:#111;transform:scaleX(0.8992);">90.0</span><span class="t" style="left:488.5px;top:576.7px;font-size:12px;color:#111;transform:scaleX(0.8991);">5</span><span class="t" style="left:596px;top:576.7px;font-size:12px;color:#111;transform:scaleX(1.0129);">shampoo</span><span class="t" style="left:842.5px;top:576.7px;font-size:12px;color:#111;transform:scaleX(0.9366);">85</span><span class="t" style="left:1016.5px;top:576.7px;font-size:12px;color:#111;transform:scaleX(0.9366);">10</span><span class="t" style="left:1180.5px;top:576.7px;font-size:12px;color:#111;transform:scaleX(0.8992);">90.0</span><span class="t" style="left:488.5px;top:596.7px;font-size:12px;color:#111;transform:scaleX(0.8991);">6</span><span class="t" style="left:596px;top:596.7px;font-size:12px;color:#111;transform:scaleX(1.0181);">phenyl</span><span class="t" style="left:842.5px;top:596.7px;font-size:12px;color:#111;transform:scaleX(0.9366);">47</span><span class="t" style="left:1016.5px;top:596.7px;font-size:12px;color:#111;transform:scaleX(0.9366);">10</span><span class="t" style="left:1180.5px;top:596.7px;font-size:12px;color:#111;transform:scaleX(0.9159);">100.0</span><span class="t" style="left:488.5px;top:616.7px;font-size:12px;color:#111;transform:scaleX(0.8991);">7</span><span class="t" style="left:596px;top:616.7px;font-size:12px;color:#111;transform:scaleX(0.9565);">masala</span><span class="t" style="left:842.5px;top:616.7px;font-size:12px;color:#111;transform:scaleX(0.9366);">79</span><span class="t" style="left:1016.5px;top:616.7px;font-size:12px;color:#111;transform:scaleX(0.9366);">24</span><span class="t" style="left:1180.5px;top:616.7px;font-size:12px;color:#111;transform:scaleX(0.8992);">60.0</span><div style="left:637.5px;top:642.5px;width:1004.5px;height:230px;background:#fff;border:1px solid #6a6a6a;box-sizing:border-box;box-shadow:0 3px 14px rgba(0,0,0,.35);"></div><svg style="left:649px;top:650px;" width="10" height="17" viewBox="0 0 10 17"><path d="M8.500 .5C4 2 1.500 6.500 2 12l-1.500 4.500" fill="none" stroke="#1a1a2a" stroke-width="1"/><path d="M8.500 .5C9.500 5 7.500 10 2.200 12.500 1.500 7 4 2 8.500 .5z" fill="#4f6fae"/><path d="M7.800 2.500 3 11" stroke="#1a1a2a" stroke-width=".8"/></svg><span class="t" style="left:668px;top:652.5px;font-size:12px;color:#000;transform:scaleX(0.9598);">Transactions</span><svg style="left:1520px;top:652px;" width="12" height="12" viewBox="0 0 12 12"><path d="M0 6.500h11" stroke="#000" stroke-width="1.100"/></svg><svg style="left:1566.5px;top:652px;" width="12" height="12" viewBox="0 0 12 12"><path d="M.5.5h10v10H.5z" fill="none" stroke="#000" stroke-width="1.100"/></svg><svg style="left:1612px;top:652px;" width="12" height="12" viewBox="0 0 12 12"><path d="M.5.5l11 11M11.500.5l-11 11" stroke="#000" stroke-width="1.100"/></svg><div style="left:639px;top:674.5px;width:1001px;height:1px;background:#828790;"></div><div style="left:639px;top:674.5px;width:1px;height:190px;background:#828790;"></div><div style="left:1639.5px;top:674.5px;width:1px;height:190px;background:#828790;"></div><div style="left:839px;top:676px;width:1px;height:23px;background:#e5e5e5;"></div><div style="left:1039px;top:676px;width:1px;height:23px;background:#e5e5e5;"></div><div style="left:1239px;top:676px;width:1px;height:23px;background:#e5e5e5;"></div><div style="left:1439px;top:676px;width:1px;height:23px;background:#e5e5e5;"></div><span class="t" style="left:733.25px;top:680.8px;font-size:12px;color:#111;transform:scaleX(0.9583);">ID</span><span class="t" style="left:919.75px;top:680.8px;font-size:12px;color:#111;">Item ID</span><span class="t" style="left:1126.5px;top:680.8px;font-size:12px;color:#111;transform:scaleX(0.9610);">Type</span><span class="t" style="left:1315.75px;top:680.8px;font-size:12px;color:#111;transform:scaleX(1.0406);">Quantity</span><span class="t" style="left:1526.5px;top:680.8px;font-size:12px;color:#111;transform:scaleX(0.9863);">Date</span><div style="left:640px;top:779px;width:999.5px;height:20px;background:#0078d7;"></div><span class="t" style="left:644.5px;top:702.7px;font-size:12px;color:#111;transform:scaleX(0.8991);">1</span><span class="t" style="left:844px;top:702.7px;font-size:12px;color:#111;transform:scaleX(1.0284);">None</span><span class="t" style="left:1044px;top:702.7px;font-size:12px;color:#111;transform:scaleX(1.0304);">Add</span><span class="t" style="left:1244.5px;top:702.7px;font-size:12px;color:#111;transform:scaleX(0.9366);">70</span><span class="t" style="left:1444px;top:702.7px;font-size:12px;color:#111;transform:scaleX(0.9289);">2025-10-07 15:36:44</span><span class="t" style="left:644.5px;top:722.7px;font-size:12px;color:#111;transform:scaleX(0.8991);">2</span><span class="t" style="left:844px;top:722.7px;font-size:12px;color:#111;transform:scaleX(1.0284);">None</span><span class="t" style="left:1044px;top:722.7px;font-size:12px;color:#111;transform:scaleX(1.0304);">Add</span><span class="t" style="left:1244.5px;top:722.7px;font-size:12px;color:#111;transform:scaleX(0.9366);">65</span><span class="t" style="left:1444px;top:722.7px;font-size:12px;color:#111;transform:scaleX(0.9289);">2025-10-07 15:37:21</span><span class="t" style="left:644.5px;top:742.7px;font-size:12px;color:#111;transform:scaleX(0.8991);">3</span><span class="t" style="left:844px;top:742.7px;font-size:12px;color:#111;transform:scaleX(1.0284);">None</span><span class="t" style="left:1044px;top:742.7px;font-size:12px;color:#111;transform:scaleX(1.0304);">Add</span><span class="t" style="left:1244.5px;top:742.7px;font-size:12px;color:#111;transform:scaleX(0.9366);">80</span><span class="t" style="left:1444px;top:742.7px;font-size:12px;color:#111;transform:scaleX(0.9289);">2025-10-07 15:37:46</span><span class="t" style="left:644.5px;top:762.7px;font-size:12px;color:#111;transform:scaleX(0.8991);">4</span><span class="t" style="left:844px;top:762.7px;font-size:12px;color:#111;transform:scaleX(1.0284);">None</span><span class="t" style="left:1044px;top:762.7px;font-size:12px;color:#111;transform:scaleX(1.0304);">Add</span><span class="t" style="left:1244.5px;top:762.7px;font-size:12px;color:#111;transform:scaleX(0.9366);">67</span><span class="t" style="left:1444px;top:762.7px;font-size:12px;color:#111;transform:scaleX(0.9289);">2025-10-07 15:38:05</span><span class="t" style="left:644.5px;top:782.7px;font-size:12px;color:#fff;transform:scaleX(0.8991);">5</span><span class="t" style="left:844px;top:782.7px;font-size:12px;color:#fff;transform:scaleX(1.0284);">None</span><span class="t" style="left:1044px;top:782.7px;font-size:12px;color:#fff;transform:scaleX(1.0304);">Add</span><span class="t" style="left:1244.5px;top:782.7px;font-size:12px;color:#fff;transform:scaleX(0.9366);">80</span><span class="t" style="left:1444px;top:782.7px;font-size:12px;color:#fff;transform:scaleX(0.9289);">2025-10-07 15:38:27</span><span class="t" style="left:644.5px;top:802.7px;font-size:12px;color:#111;transform:scaleX(0.8991);">6</span><span class="t" style="left:844px;top:802.7px;font-size:12px;color:#111;transform:scaleX(1.0284);">None</span><span class="t" style="left:1044px;top:802.7px;font-size:12px;color:#111;transform:scaleX(1.0304);">Add</span><span class="t" style="left:1244.5px;top:802.7px;font-size:12px;color:#111;transform:scaleX(0.9366);">45</span><span class="t" style="left:1444px;top:802.7px;font-size:12px;color:#111;transform:scaleX(0.9289);">2025-10-07 15:38:50</span><span class="t" style="left:644.5px;top:822.7px;font-size:12px;color:#111;transform:scaleX(0.8991);">7</span><span class="t" style="left:844px;top:822.7px;font-size:12px;color:#111;transform:scaleX(0.8991);">5</span><span class="t" style="left:1044px;top:822.7px;font-size:12px;color:#111;transform:scaleX(0.9342);">Receive</span><span class="t" style="left:1244.5px;top:822.7px;font-size:12px;color:#111;transform:scaleX(0.8991);">5</span><span class="t" style="left:1444px;top:822.7px;font-size:12px;color:#111;transform:scaleX(0.9289);">2025-10-07 15:39:51</span><span class="t" style="left:644.5px;top:842.7px;font-size:12px;color:#111;transform:scaleX(0.8991);">8</span><span class="t" style="left:844px;top:842.7px;font-size:12px;color:#111;transform:scaleX(0.8991);">3</span><span class="t" style="left:1044px;top:842.7px;font-size:12px;color:#111;transform:scaleX(0.8996);">Sell</span><span class="t" style="left:1244.5px;top:842.7px;font-size:12px;color:#111;transform:scaleX(0.8991);">2</span><span class="t" style="left:1444px;top:842.7px;font-size:12px;color:#111;transform:scaleX(0.9289);">2025-10-07 15:40:17</span></div></div><div style="left:475px;top:217px;width:5px;height:646px;background:#c9d3e2;"></div><div style="left:1882.5px;top:211px;width:17.5px;height:652px;background:#f0f0f0;"></div><div style="left:1884.5px;top:232px;width:13px;height:328px;background:#cdcdcd;"></div><svg style="left:1885.5px;top:217.5px;" width="10" height="7" viewBox="0 0 10 7"><path d="M1.500 5.500 5 2l3.500 3.500" fill="none" stroke="#333" stroke-width="1.600"/></svg><svg style="left:1886px;top:851px;" width="10" height="7" viewBox="0 0 10 7"><path d="M1.500 1.500 5 5l3.500-3.500" fill="none" stroke="#333" stroke-width="1.600"/></svg><div style="left:475px;top:863px;width:1425px;height:17px;background:#f0f0f0;"></div><div style="left:492px;top:864.5px;width:1000px;height:14px;background:#cdcdcd;"></div><svg style="left:480px;top:867px;" width="7" height="10" viewBox="0 0 7 10"><path d="M5.500 1.500 2 5l3.500 3.500" fill="none" stroke="#333" stroke-width="1.600"/></svg><svg style="left:1870px;top:867px;" width="7" height="10" viewBox="0 0 7 10"><path d="M1.500 1.500 5 5 1.500 8.500" fill="none" stroke="#333" stroke-width="1.600"/></svg><div style="left:475px;top:880px;width:1425px;height:27px;background:#f0f0f0;"></div><div style="left:475px;top:880px;width:1425px;height:1px;background:#dcdcdc;"></div><svg style="left:479px;top:888px;" width="11" height="11" viewBox="0 0 11 11"><path d="M5.500 .5v10M.5 5.500h10M4 2l1.500-1.500L7 2M4 9l1.500 1.500L7 9M2 4 .5 5.500 2 7M9 4l1.500 1.500L9 7" fill="none" stroke="#333" stroke-width="1"/></svg><div style="left:629.5px;top:882px;width:1px;height:24px;background:#dadada;"></div><div style="left:785.5px;top:882px;width:1px;height:24px;background:#dadada;"></div><div style="left:941.5px;top:882px;width:1px;height:24px;background:#dadada;"></div><div style="left:1098px;top:882px;width:1px;height:24px;background:#dadada;"></div><div style="left:1681px;top:882px;width:1px;height:24px;background:#dadada;"></div><svg style="left:637px;top:888px;" width="13" height="12" viewBox="0 0 13 12"><path d="M2.500 2.500h8v7h-8z" fill="none" stroke="#333" stroke-width="1" stroke-dasharray="2 1"/><path d="M1 1v4M1 1h3M9 11h3.500M12.500 11V8.500" stroke="#333" stroke-width="1" fill="none"/></svg><svg style="left:793px;top:887px;" width="14" height="14" viewBox="0 0 14 14"><path d="M4.500 1.500h8v7h-8z" fill="none" stroke="#333" stroke-width="1"/><path d="M1.500 1v9M.5 8.500l1 1.500 1-1.500M4 12h9M11.500 11l1.500 1-1.500 1" fill="none" stroke="#333" stroke-width=".9"/></svg><span class="t" style="left:812px;top:887.8px;font-size:12px;color:#111;transform:scaleX(0.9218);">1920 × 1200px</span><svg style="left:950px;top:888px;" width="12" height="12" viewBox="0 0 12 12"><path d="M.5 .5h9l2 2v9H.5z" fill="none" stroke="#333" stroke-width="1"/><path d="M3 .5v3.500h5V.5M3 11.500V7.500h6v4" fill="none" stroke="#333" stroke-width="1"/></svg><span class="t" style="left:967.5px;top:887.8px;font-size:12px;color:#111;transform:scaleX(0.8810);">Size: 185.8KB</span><span class="t" style="left:1703px;top:887.8px;font-size:12px;color:#111;transform:scaleX(0.9123);">100%</span><svg style="left:1737px;top:885px;" width="17" height="17" viewBox="0 0 17 17"><circle cx="8.500" cy="8.500" r="7.300" fill="#f7f7f7" stroke="#6a6a6a" stroke-width="1"/><path d="M4.500 8.500h8" stroke="#444" stroke-width="1.600"/></svg><div style="left:1764px;top:891.5px;width:85px;height:3px;background:#e3e3e3;border:1px solid #d0d0d0;box-sizing:border-box;"></div><svg style="left:1801px;top:884px;" width="11" height="18" viewBox="0 0 11 18"><path d="M.5 .5h10v12L5.500 17.500.5 12.500z" fill="#0078d7"/></svg><svg style="left:1859px;top:885px;" width="17" height="17" viewBox="0 0 17 17"><circle cx="8.500" cy="8.500" r="7.300" fill="#f7f7f7" stroke="#6a6a6a" stroke-width="1"/><path d="M4.500 8.500h8M8.500 4.500v8" stroke="#444" stroke-width="1.600"/></svg><div style="left:1896px;top:895px;width:2px;height:2px;background:#bfbfbf;"></div><div style="left:1892px;top:899px;width:2px;height:2px;background:#bfbfbf;"></div><div style="left:1896px;top:899px;width:2px;height:2px;background:#bfbfbf;"></div><div style="left:1888px;top:903px;width:2px;height:2px;background:#bfbfbf;"></div><div style="left:1892px;top:903px;width:2px;height:2px;background:#bfbfbf;"></div><div style="left:1896px;top:903px;width:2px;height:2px;background:#bfbfbf;"></div><div style="left:474px;top:65px;width:1px;height:842px;background:#e4e6ea;"></div><div style="left:1899px;top:65px;width:1px;height:842px;background:#c4c4c4;"></div><div style="left:474px;top:906px;width:1426px;height:1px;background:#8a8a8a;"></div><div style="left:474px;top:64.5px;width:1426px;height:1px;background:#9a9a9a;"></div><div style="left:0px;top:1160px;width:1920px;height:40px;"><div style="left:0;top:0;width:1920px;height:40px;background:linear-gradient(90deg,#302e25 0%,#34322a 18%,#343129 50%,#38352b 72%,#302e26 84%,#232119 94%,#1e1d19 100%)"></div><div style="left:631px;top:0px;width:48px;height:40px;background:#424138;"></div><div style="left:1218px;top:0px;width:49px;height:40px;background:#4d4b43;"></div><div style="left:1218px;top:38px;width:49px;height:2px;background:#8fc8f0;"></div><div style="left:488px;top:38px;width:40px;height:2px;background:#8fc8f0;"></div><div style="left:1125px;top:38px;width:40px;height:2px;background:#8fc8f0;"></div><div style="left:1174px;top:38px;width:40px;height:2px;background:#8fc8f0;"></div><div style="left:1271px;top:38px;width:40px;height:2px;background:#8fc8f0;"></div><svg style="left:15px;top:11px;" width="18" height="18"><use href="#win"/></svg><div style="left:48px;top:1px;width:288px;height:39px;background:#f2f2f2;"></div><svg style="left:59px;top:11px;" width="18" height="18"><use href="#srch"/></svg><span class="t" style="left:88px;top:12.5px;font-size:15px;color:#3a3a3a;transform:scaleX(0.9656);">Type here to search</span><svg style="left:262px;top:0px;" width="72" height="40"><use href="#puck"/></svg><svg style="left:348px;top:8px;" width="24" height="24"><use href="#cort"/></svg><svg style="left:395px;top:8px;" width="24" height="24"><use href="#tview"/></svg><svg style="left:446px;top:8px;" width="24" height="24"><use href="#copilot"/></svg><svg style="left:495px;top:8px;" width="24" height="24"><use href="#explorer"/></svg><svg style="left:544px;top:8px;" width="24" height="24"><use href="#store"/></svg><svg style="left:593px;top:8px;" width="24" height="24"><use href="#outlook"/></svg><svg style="left:643px;top:8px;" width="24" height="24"><use href="#chromeA"/></svg><svg style="left:693px;top:8px;" width="24" height="24"><use href="#sniptool"/></svg><svg style="left:741px;top:8px;" width="24" height="24"><use href="#ai"/></svg><svg style="left:791px;top:7px;" width="28" height="26"><use href="#whatsapp"/></svg><svg style="left:839px;top:8px;" width="24" height="24"><use href="#chromeB"/></svg><svg style="left:888px;top:8px;" width="24" height="24"><use href="#chromeC"/></svg><svg style="left:936px;top:8px;" width="24" height="24"><use href="#edge"/></svg><svg style="left:985px;top:8px;" width="24" height="24"><use href="#netflix"/></svg><svg style="left:1034px;top:8px;" width="24" height="24"><use href="#excel"/></svg><svg style="left:1083px;top:8px;" width="24" height="24"><use href="#chromeD"/></svg><svg style="left:1133px;top:8px;" width="24" height="24"><use href="#chromeE"/></svg><svg style="left:1180px;top:8px;" width="24" height="24"><use href="#notepad"/></svg><svg style="left:1230px;top:8px;" width="24" height="24"><use href="#paint"/></svg><svg style="left:1279px;top:8px;" width="24" height="24"><use href="#snipsk"/></svg><span class="t" style="left:1442px;top:11.5px;font-size:12px;color:#fff;transform:scaleX(0.8998);">EN</span><svg style="left:1542px;top:8px;" width="28" height="24"><use href="#smoke"/></svg><span class="t" style="left:1576px;top:12.5px;font-size:15px;color:#fff;transform:scaleX(0.8653);">24°C</span><span class="t" style="left:1614px;top:12.5px;font-size:15px;color:#fff;transform:scaleX(0.8997);">Smoke</span><svg style="left:1679px;top:12px;" width="16" height="16"><use href="#chev"/></svg><svg style="left:1704px;top:10px;" width="16" height="20"><use href="#meet"/></svg><svg style="left:1725px;top:12px;" width="20" height="16"><use href="#vol"/></svg><svg style="left:1749px;top:12px;" width="20" height="16"><use href="#net"/></svg><svg style="left:1774.5px;top:13px;" width="24.5" height="14"><use href="#kbd"/></svg><span class="t" style="left:1814px;top:5.3px;font-size:12px;color:#fff;transform:scaleX(0.9399);">4:40 PM</span><span class="t" style="left:1809px;top:23.3px;font-size:12px;color:#fff;transform:scaleX(0.9929);">10/7/2025</span><svg style="left:1875px;top:7px;" width="30" height="28"><use href="#notif"/></svg><span class="t" style="left:1891.28px;top:22.35px;font-size:10.5px;color:#fff;font-weight:bold;">3</span><div style="left:1914px;top:0px;width:1px;height:40px;background:#5a5a55;"></div></div><div style="left:604px;top:1139px;width:103px;height:21px;background:#fff;border:1px solid #767676;box-sizing:border-box;"></div><span class="t" style="left:610px;top:1144px;font-size:12px;color:#444;">Bushra - Chrome</span></div></body></html>
